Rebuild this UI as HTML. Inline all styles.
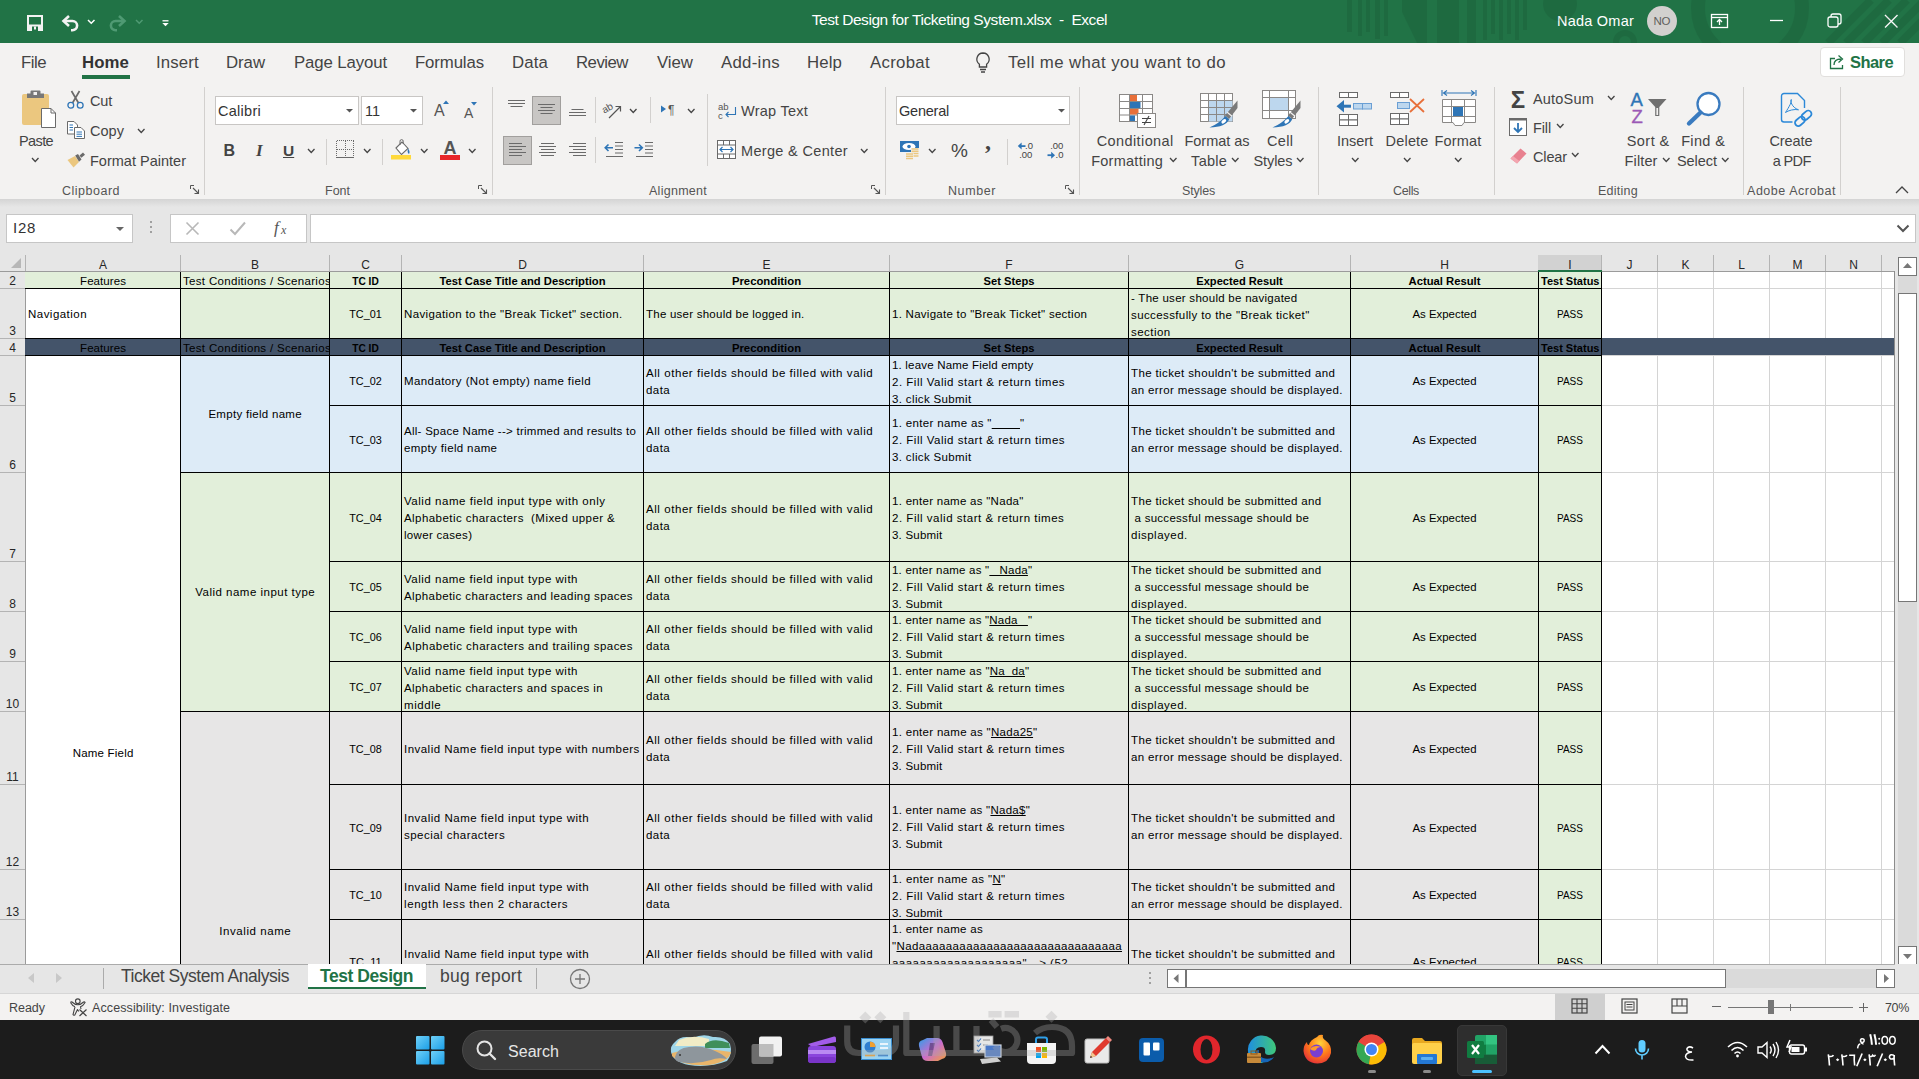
<!DOCTYPE html>
<html><head><meta charset="utf-8"><title>Excel</title><style>
html,body{margin:0;padding:0;}
body{width:1919px;height:1079px;overflow:hidden;position:relative;background:#e6e6e6;font-family:"Liberation Sans",sans-serif;}
.a{position:absolute;box-sizing:border-box;}
.t{white-space:nowrap;}
.c{position:absolute;white-space:nowrap;font-size:11.5px;line-height:17px;color:#000;}

svg{position:absolute;overflow:visible;}
u{text-decoration-thickness:1px;text-underline-offset:1px;}
</style></head><body>
<div class="a" style="left:0px;top:0px;width:1919px;height:43px;background:#217346;"></div>
<div class="a t" style="top:11px;font-size:15.5px;line-height:17px;color:#fff;letter-spacing:-0.44px;left:559.38px;width:800px;text-align:center;white-space:pre;">Test Design for Ticketing System.xlsx  -  Excel</div>
<div class="a t" style="top:13px;font-size:14.5px;line-height:16px;color:#fff;letter-spacing:0.23px;left:1557px;">Nada Omar</div>
<div class="a" style="left:1647px;top:6px;width:30px;height:30px;border-radius:15px;background:#d2d0ce;"></div>
<div class="a t" style="top:15px;font-size:11.5px;line-height:12px;color:#605e5c;letter-spacing:-0.12px;left:1261.94px;width:800px;text-align:center;">NO</div>
<div class="a" style="left:0px;top:43px;width:1919px;height:156px;background:#f3f2f1;"></div>
<div class="a t" style="top:53px;font-size:16.8px;line-height:19px;color:#444;letter-spacing:-0.52px;left:21px;">File</div>
<div class="a t" style="top:53px;font-size:16.8px;line-height:19px;color:#333;font-weight:700;letter-spacing:0.08px;left:82px;">Home</div>
<div class="a t" style="top:53px;font-size:16.8px;line-height:19px;color:#444;letter-spacing:0.16px;left:156px;">Insert</div>
<div class="a t" style="top:53px;font-size:16.8px;line-height:19px;color:#444;letter-spacing:-0.05px;left:226px;">Draw</div>
<div class="a t" style="top:53px;font-size:16.8px;line-height:19px;color:#444;letter-spacing:-0.12px;left:294px;">Page Layout</div>
<div class="a t" style="top:53px;font-size:16.8px;line-height:19px;color:#444;letter-spacing:-0.13px;left:415px;">Formulas</div>
<div class="a t" style="top:53px;font-size:16.8px;line-height:19px;color:#444;letter-spacing:0.13px;left:512px;">Data</div>
<div class="a t" style="top:53px;font-size:16.8px;line-height:19px;color:#444;letter-spacing:-0.51px;left:576px;">Review</div>
<div class="a t" style="top:53px;font-size:16.8px;line-height:19px;color:#444;letter-spacing:-0.03px;left:657px;">View</div>
<div class="a t" style="top:53px;font-size:16.8px;line-height:19px;color:#444;letter-spacing:0.29px;left:721px;">Add-ins</div>
<div class="a t" style="top:53px;font-size:16.8px;line-height:19px;color:#444;letter-spacing:0.11px;left:807px;">Help</div>
<div class="a t" style="top:53px;font-size:16.8px;line-height:19px;color:#444;letter-spacing:0.30px;left:870px;">Acrobat</div>
<div class="a" style="left:82px;top:75px;width:48px;height:4px;background:#217346;"></div>
<div class="a t" style="top:53px;font-size:16.8px;line-height:19px;color:#444;letter-spacing:0.40px;left:1008px;">Tell me what you want to do</div>
<div class="a" style="left:1820px;top:47px;width:85px;height:30px;background:#fff;border:1px solid #e1dfdd;border-radius:4px;"></div>
<div class="a t" style="top:53px;font-size:16.5px;line-height:18px;color:#217346;font-weight:700;letter-spacing:-0.57px;left:1850px;">Share</div>
<div class="a" style="left:204px;top:87px;width:1px;height:108px;background:#d2d0ce;"></div>
<div class="a" style="left:492px;top:87px;width:1px;height:108px;background:#d2d0ce;"></div>
<div class="a" style="left:885px;top:87px;width:1px;height:108px;background:#d2d0ce;"></div>
<div class="a" style="left:1079px;top:87px;width:1px;height:108px;background:#d2d0ce;"></div>
<div class="a" style="left:1318px;top:87px;width:1px;height:108px;background:#d2d0ce;"></div>
<div class="a" style="left:1494px;top:87px;width:1px;height:108px;background:#d2d0ce;"></div>
<div class="a" style="left:1743px;top:87px;width:1px;height:108px;background:#d2d0ce;"></div>
<div class="a" style="left:1840px;top:87px;width:1px;height:108px;background:#d2d0ce;"></div>
<div class="a t" style="top:133px;font-size:14.5px;line-height:16px;color:#444;letter-spacing:-0.62px;left:19px;">Paste</div>
<div class="a t" style="top:93px;font-size:14.5px;line-height:16px;color:#444;letter-spacing:-0.19px;left:90px;">Cut</div>
<div class="a t" style="top:123px;font-size:14.5px;line-height:16px;color:#444;letter-spacing:0.04px;left:90px;">Copy</div>
<div class="a t" style="top:153px;font-size:14.5px;line-height:16px;color:#444;letter-spacing:0.01px;left:90px;">Format Painter</div>
<div class="a t" style="top:184px;font-size:12.5px;line-height:14px;color:#555;letter-spacing:0.50px;left:62px;">Clipboard</div>
<div class="a t" style="top:184px;font-size:12.5px;line-height:14px;color:#555;letter-spacing:-0.00px;left:325px;">Font</div>
<div class="a t" style="top:184px;font-size:12.5px;line-height:14px;color:#555;letter-spacing:0.27px;left:649px;">Alignment</div>
<div class="a t" style="top:184px;font-size:12.5px;line-height:14px;color:#555;letter-spacing:0.59px;left:948px;">Number</div>
<div class="a t" style="top:184px;font-size:12.5px;line-height:14px;color:#555;letter-spacing:-0.17px;left:1182px;">Styles</div>
<div class="a t" style="top:184px;font-size:12.5px;line-height:14px;color:#555;letter-spacing:-0.36px;left:1393px;">Cells</div>
<div class="a t" style="top:184px;font-size:12.5px;line-height:14px;color:#555;letter-spacing:0.25px;left:1598px;">Editing</div>
<div class="a t" style="top:184px;font-size:12.5px;line-height:14px;color:#555;letter-spacing:0.54px;left:1747px;">Adobe Acrobat</div>
<div class="a" style="left:215px;top:96px;width:144px;height:29px;background:#fff;border:1px solid #c8c6c4;"></div>
<div class="a" style="left:361px;top:96px;width:62px;height:29px;background:#fff;border:1px solid #c8c6c4;"></div>
<div class="a t" style="top:103px;font-size:14.5px;line-height:16px;color:#333;letter-spacing:0.27px;left:218px;">Calibri</div>
<div class="a t" style="top:103px;font-size:14.5px;line-height:16px;color:#333;letter-spacing:-0.03px;left:365px;">11</div>
<div class="a t" style="top:142px;font-size:16px;line-height:17px;color:#444;font-weight:700;letter-spacing:-1.55px;left:223.5px;">B</div>
<div class="a t" style="top:142px;font-size:16px;line-height:17px;color:#444;left:256px;font-family:'Liberation Serif',serif;font-weight:700;font-size:17px;"><i>I</i></div>
<div class="a t" style="top:142px;font-size:15.5px;line-height:17px;color:#444;font-weight:700;left:283px;"><u>U</u></div>
<div class="a t" style="top:103px;font-size:14.5px;line-height:16px;color:#444;letter-spacing:0.25px;left:741px;">Wrap Text</div>
<div class="a t" style="top:143px;font-size:14.5px;line-height:16px;color:#444;letter-spacing:0.33px;left:741px;">Merge &amp; Center</div>
<div class="a" style="left:896px;top:96px;width:174px;height:29px;background:#fff;border:1px solid #c8c6c4;"></div>
<div class="a t" style="top:103px;font-size:14.5px;line-height:16px;color:#333;letter-spacing:-0.23px;left:899px;">General</div>
<div class="a t" style="top:140px;font-size:19px;line-height:21px;color:#444;letter-spacing:-1.40px;left:951px;">%</div>
<div class="a t" style="top:128px;font-size:24px;line-height:27px;color:#444;font-weight:700;left:985px;font-family:'Liberation Serif',serif;">,</div>
<div class="a t" style="top:133px;font-size:14.5px;line-height:16px;color:#444;letter-spacing:0.40px;left:735.20px;width:800px;text-align:center;">Conditional</div>
<div class="a t" style="top:153px;font-size:14.5px;line-height:16px;color:#444;letter-spacing:0.27px;left:727.14px;width:800px;text-align:center;">Formatting</div>
<div class="a t" style="top:133px;font-size:14.5px;line-height:16px;color:#444;letter-spacing:-0.03px;left:816.99px;width:800px;text-align:center;">Format as</div>
<div class="a t" style="top:153px;font-size:14.5px;line-height:16px;color:#444;letter-spacing:0.27px;left:809.13px;width:800px;text-align:center;">Table</div>
<div class="a t" style="top:133px;font-size:14.5px;line-height:16px;color:#444;letter-spacing:0.26px;left:880.13px;width:800px;text-align:center;">Cell</div>
<div class="a t" style="top:153px;font-size:14.5px;line-height:16px;color:#444;letter-spacing:-0.08px;left:872.96px;width:800px;text-align:center;">Styles</div>
<div class="a t" style="top:133px;font-size:14.5px;line-height:16px;color:#444;letter-spacing:-0.04px;left:954.98px;width:800px;text-align:center;">Insert</div>
<div class="a t" style="top:133px;font-size:14.5px;line-height:16px;color:#444;letter-spacing:0.18px;left:1007.09px;width:800px;text-align:center;">Delete</div>
<div class="a t" style="top:133px;font-size:14.5px;line-height:16px;color:#444;letter-spacing:0.18px;left:1058.09px;width:800px;text-align:center;">Format</div>
<div class="a t" style="top:91px;font-size:14.5px;line-height:16px;color:#444;letter-spacing:0.19px;left:1533px;">AutoSum</div>
<div class="a t" style="top:120px;font-size:14.5px;line-height:16px;color:#444;letter-spacing:-0.13px;left:1533px;">Fill</div>
<div class="a t" style="top:149px;font-size:14.5px;line-height:16px;color:#444;letter-spacing:-0.13px;left:1533px;">Clear</div>
<div class="a t" style="top:133px;font-size:14.5px;line-height:16px;color:#444;letter-spacing:0.45px;left:1248.23px;width:800px;text-align:center;">Sort &amp;</div>
<div class="a t" style="top:153px;font-size:14.5px;line-height:16px;color:#444;letter-spacing:0.13px;left:1241.07px;width:800px;text-align:center;">Filter</div>
<div class="a t" style="top:133px;font-size:14.5px;line-height:16px;color:#444;letter-spacing:0.35px;left:1303.17px;width:800px;text-align:center;">Find &amp;</div>
<div class="a t" style="top:153px;font-size:14.5px;line-height:16px;color:#444;letter-spacing:-0.05px;left:1296.98px;width:800px;text-align:center;">Select</div>
<div class="a t" style="top:133px;font-size:14.5px;line-height:16px;color:#444;letter-spacing:-0.09px;left:1390.96px;width:800px;text-align:center;">Create</div>
<div class="a t" style="top:153px;font-size:14.5px;line-height:16px;color:#444;letter-spacing:-0.62px;left:1391.69px;width:800px;text-align:center;">a PDF</div>
<div class="a" style="left:0;top:199px;width:1919px;height:8px;background:linear-gradient(#d4d4d4,#e6e6e6);"></div>
<div class="a" style="left:6px;top:213.5px;width:127px;height:29px;background:#fff;border:1px solid #c6c6c6;"></div>
<div class="a t" style="top:219px;font-size:15px;line-height:17px;color:#333;letter-spacing:0.72px;left:13px;">I28</div>
<div class="a" style="left:170px;top:213.5px;width:137px;height:29px;background:#fff;border:1px solid #c6c6c6;"></div>
<div class="a" style="left:310px;top:213.5px;width:1606px;height:29px;background:#fff;border:1px solid #c6c6c6;"></div>
<svg class="a" style="left:26px;top:14px;" width="18" height="18" viewBox="0 0 18 18"><rect x="2" y="2" width="14" height="14" fill="none" stroke="#f3f3f3" stroke-width="2"/><rect x="2" y="10.5" width="14" height="6" fill="#f3f3f3"/><rect x="6" y="12.5" width="6" height="4.5" fill="#217346"/><rect x="8" y="12.5" width="2" height="3" fill="#f3f3f3"/></svg>
<svg class="a" style="left:60px;top:13px;" width="22" height="19" viewBox="0 0 22 19"><path d="M9 3 L3.5 8 L9 13" fill="none" stroke="#f3f3f3" stroke-width="2.6"/><path d="M4 8 H12.5 a4.6 4.6 0 0 1 0 9.2 H11" fill="none" stroke="#f3f3f3" stroke-width="2.6"/></svg>
<svg class="a" style="left:87.25px;top:18.9px;" width="8.5" height="5.2" viewBox="0 0 8.5 5.2"><path d="M1 1 L4.25 4.2 L7.5 1" fill="none" stroke="#fff" stroke-width="1.5"/></svg>
<svg class="a" style="left:106px;top:13px;" width="22" height="19" viewBox="0 0 22 19"><path d="M13 3 L18.5 8 L13 13" fill="none" stroke="#4f9a73" stroke-width="2.6"/><path d="M18 8 H9.5 a4.6 4.6 0 0 0 0 9.2 H11" fill="none" stroke="#4f9a73" stroke-width="2.6"/></svg>
<svg class="a" style="left:135.25px;top:18.9px;" width="8.5" height="5.2" viewBox="0 0 8.5 5.2"><path d="M1 1 L4.25 4.2 L7.5 1" fill="none" stroke="#4f9a73" stroke-width="1.5"/></svg>
<svg class="a" style="left:160px;top:18px;" width="10" height="10" viewBox="0 0 10 10"><path d="M2.5 2.8 H8.5" stroke="#fff" stroke-width="1.3"/><path d="M2.3 5 H8.7 L5.5 8.3 Z" fill="#fff"/></svg>
<svg class="a" style="left:1710px;top:12px;" width="20" height="18" viewBox="0 0 20 18"><rect x="1.5" y="2.5" width="16" height="13" fill="none" stroke="#fff" stroke-width="1.3"/><path d="M1.5 5.5 H17.5" stroke="#fff" stroke-width="1.3"/><path d="M9.5 13 V8 M7 10 L9.5 7.5 L12 10" fill="none" stroke="#fff" stroke-width="1.3"/></svg>
<svg class="a" style="left:1770px;top:19px;" width="14" height="3" viewBox="0 0 14 3"><path d="M0 1.5 H13" stroke="#fff" stroke-width="1.3"/></svg>
<svg class="a" style="left:1827px;top:13px;" width="16" height="16" viewBox="0 0 16 16"><rect x="1" y="4" width="10" height="10" rx="2" fill="none" stroke="#fff" stroke-width="1.3"/><path d="M4 4 V3 a2 2 0 0 1 2 -2 H12 a2 2 0 0 1 2 2 V9 a2 2 0 0 1 -2 2 H11" fill="none" stroke="#fff" stroke-width="1.3"/></svg>
<svg class="a" style="left:1884px;top:14px;" width="15" height="15" viewBox="0 0 15 15"><path d="M1 1 L13.5 13.5 M13.5 1 L1 13.5" stroke="#fff" stroke-width="1.4"/></svg>
<svg class="a" style="left:974px;top:51px;" width="18" height="24" viewBox="0 0 18 24"><path d="M9 2 a6.2 6.2 0 0 0 -3.6 11.2 V16 H12.6 V13.2 A6.2 6.2 0 0 0 9 2 Z" fill="none" stroke="#444" stroke-width="1.3"/><path d="M6 18.5 H12 M7 21 H11" stroke="#444" stroke-width="1.3"/></svg>
<svg class="a" style="left:1829px;top:54px;" width="17" height="16" viewBox="0 0 17 16"><path d="M6 4.5 H1.5 V14.5 H13.5 V11" fill="none" stroke="#217346" stroke-width="1.3"/><path d="M5 11 C5 7 8 5 12 5 M9.5 1.5 L13.5 5 L9.5 8.5" fill="none" stroke="#217346" stroke-width="1.3"/></svg>
<svg class="a" style="left:116.0px;top:226.5px;" width="8" height="4" viewBox="0 0 8 4"><path d="M0 0 L8 0 L4.0 4 Z" fill="#666"/></svg>
<div class="a" style="left:150px;top:221px;width:2px;height:2px;background:#a0a0a0;"></div>
<div class="a" style="left:150px;top:226px;width:2px;height:2px;background:#a0a0a0;"></div>
<div class="a" style="left:150px;top:231px;width:2px;height:2px;background:#a0a0a0;"></div>
<svg class="a" style="left:185px;top:221px;" width="16" height="16" viewBox="0 0 16 16"><path d="M1.5 1.5 L13.5 13.5 M13.5 1.5 L1.5 13.5" stroke="#b8b8b8" stroke-width="1.6"/></svg>
<svg class="a" style="left:229px;top:221px;" width="18" height="16" viewBox="0 0 18 16"><path d="M1.5 8.5 L6 13 L16 1.5" fill="none" stroke="#b8b8b8" stroke-width="2"/></svg>
<div class="a t" style="top:218px;font-size:17px;line-height:19px;color:#555;left:274px;font-family:'Liberation Serif',serif;"><i>f</i></div>
<div class="a t" style="top:223px;font-size:12px;line-height:14px;color:#555;left:281px;font-family:'Liberation Serif',serif;"><i>x</i></div>
<svg class="a" style="left:1896px;top:224px;" width="14" height="9" viewBox="0 0 14 9"><path d="M1.5 1.5 L7 7 L12.5 1.5" fill="none" stroke="#555" stroke-width="2"/></svg>
<svg class="a" style="left:1280px;top:0px;overflow:hidden;" width="639" height="43" viewBox="0 0 639 43"><g fill="#000" opacity="0.07"><rect x="67" y="0" width="5" height="32"/><rect x="78" y="0" width="4" height="36"/><rect x="86" y="0" width="4" height="32"/><rect x="95" y="0" width="5" height="39"/><rect x="104" y="0" width="4" height="36"/><path d="M122 0 H147 V43 H137 L122 12 Z"/><rect x="157" y="0" width="22" height="43"/><rect x="187" y="0" width="9" height="43"/><rect x="203" y="0" width="4" height="40"/><rect x="211" y="0" width="4" height="34"/><rect x="219" y="0" width="4" height="40"/><rect x="227" y="0" width="4" height="34"/><rect x="235" y="0" width="4" height="40"/><rect x="243" y="0" width="4" height="30"/><circle cx="280" cy="4" r="17"/></g><g fill="none" stroke="#000" opacity="0.07"><circle cx="345" cy="42" r="9" stroke-width="6"/><circle cx="470" cy="8" r="52" stroke-width="14"/><path d="M548 43 L591 0 M566 43 L609 0 M584 43 L627 0 M602 43 L645 0 M620 43 L663 0" stroke-width="8"/></g></svg>
<svg class="a" style="left:19px;top:89px;" width="40" height="42" viewBox="0 0 40 42"><rect x="3" y="5" width="27" height="31" rx="2" fill="#ebc77f"/><path d="M8 9 V4.5 H11.5 V2.5 a1 1 0 0 1 1 -1 H20.5 a1 1 0 0 1 1 1 V4.5 H25 V9 Z" fill="#787878"/><rect x="14.5" y="3" width="3.5" height="3" fill="#f3f2f1"/><path d="M22.5 19.5 H32 L36.5 24 V38.5 H22.5 Z" fill="#fff" stroke="#6a6a6a" stroke-width="1"/><path d="M32 19.5 V24 H36.5" fill="none" stroke="#6a6a6a" stroke-width="1"/></svg>
<svg class="a" style="left:31.15px;top:156.75px;" width="8.5" height="5.5" viewBox="0 0 8.5 5.5"><path d="M1 1 L4.25 4.5 L7.5 1" fill="none" stroke="#444" stroke-width="1.3"/></svg>
<svg class="a" style="left:66px;top:90px;" width="19" height="20" viewBox="0 0 19 20"><path d="M5.5 1 L12.5 13 M13.5 1 L6.5 13" stroke="#6a6a6a" stroke-width="1.7" fill="none"/><circle cx="4.8" cy="15.2" r="2.9" fill="none" stroke="#2e75b6" stroke-width="1.3"/><circle cx="14.2" cy="15.2" r="2.9" fill="none" stroke="#2e75b6" stroke-width="1.3"/></svg>
<svg class="a" style="left:66px;top:120px;" width="20" height="20" viewBox="0 0 20 20"><path d="M1.5 1.5 H8 L11.5 5 V14 H1.5 Z" fill="#fff" stroke="#6a6a6a" stroke-width="1"/><path d="M3.5 5 H7 M3.5 7.5 H7 M3.5 10 H7" stroke="#2e75b6" stroke-width="1"/><path d="M8.5 7.5 H15 L18.5 11 V18.5 H8.5 Z" fill="#fff" stroke="#6a6a6a" stroke-width="1"/><path d="M10.5 12 H16 M10.5 14.2 H16 M10.5 16.4 H16" stroke="#2e75b6" stroke-width="1"/></svg>
<svg class="a" style="left:137.25px;top:128.05px;" width="8.5" height="5.5" viewBox="0 0 8.5 5.5"><path d="M1 1 L4.25 4.5 L7.5 1" fill="none" stroke="#444" stroke-width="1.3"/></svg>
<svg class="a" style="left:66px;top:151px;" width="20" height="18" viewBox="0 0 20 18"><path d="M1.5 9 L9 5 L13 11 L7.5 16.5 Z" fill="#ebc77f"/><path d="M9.2 4.6 L12 3 L15.5 8.5 L13 10.8 Z" fill="#6a6a6a"/><path d="M13.5 4.5 L17 1.5 L19 3.8 L15.3 6.8 Z" fill="#6a6a6a"/></svg>
<svg class="a" style="left:190px;top:185px;" width="10" height="10" viewBox="0 0 10 10"><path d="M0.5 4 V0.5 H4" fill="none" stroke="#555" stroke-width="1"/><path d="M3 3 L8.5 8.5 M8.5 4.5 V8.5 H4.5" fill="none" stroke="#555" stroke-width="1.1"/></svg>
<svg class="a" style="left:345.5px;top:108.75px;" width="7" height="3.5" viewBox="0 0 7 3.5"><path d="M0 0 L7 0 L3.5 3.5 Z" fill="#555"/></svg>
<svg class="a" style="left:409.5px;top:108.75px;" width="7" height="3.5" viewBox="0 0 7 3.5"><path d="M0 0 L7 0 L3.5 3.5 Z" fill="#555"/></svg>
<div class="a t" style="top:102px;font-size:16px;line-height:17px;color:#555;letter-spacing:-0.17px;left:434px;">A</div>
<svg class="a" style="left:443px;top:100px;" width="7" height="5" viewBox="0 0 7 5"><path d="M0 4 L3 0.5 L6 4 Z" fill="#2e75b6"/></svg>
<div class="a t" style="top:105px;font-size:14px;line-height:16px;color:#555;letter-spacing:0.66px;left:464px;">A</div>
<svg class="a" style="left:471px;top:101px;" width="7" height="5" viewBox="0 0 7 5"><path d="M0 1 L3 4.5 L6 1 Z" fill="#2e75b6"/></svg>
<svg class="a" style="left:306.75px;top:148.25px;" width="8.5" height="5.5" viewBox="0 0 8.5 5.5"><path d="M1 1 L4.25 4.5 L7.5 1" fill="none" stroke="#444" stroke-width="1.3"/></svg>
<div class="a" style="left:326px;top:139px;width:1px;height:26px;background:#d2d0ce;"></div>
<svg class="a" style="left:336px;top:140px;" width="18" height="19" viewBox="0 0 18 19"><g shape-rendering="crispEdges" fill="none" stroke="#6a6a6a" stroke-width="1"><path d="M0.5 0.5 H17.5 M0.5 0.5 V17 M17.5 0.5 V17 M9.5 0.5 V17 M0.5 9.5 H17.5" stroke-dasharray="1 1"/><path d="M0 17.5 H18"/></g></svg>
<svg class="a" style="left:362.75px;top:148.25px;" width="8.5" height="5.5" viewBox="0 0 8.5 5.5"><path d="M1 1 L4.25 4.5 L7.5 1" fill="none" stroke="#444" stroke-width="1.3"/></svg>
<div class="a" style="left:382px;top:139px;width:1px;height:26px;background:#d2d0ce;"></div>
<svg class="a" style="left:391px;top:139px;" width="20" height="24" viewBox="0 0 20 24"><path d="M5 9 L11 3 L17 9.5 L10.5 15.5 Z" fill="#fff" stroke="#6a6a6a" stroke-width="1.1"/><path d="M9 6 V2.2 a1.6 1.6 0 0 1 3.2 0 V5" fill="none" stroke="#6a6a6a" stroke-width="1"/><path d="M17 9.5 q2.5 3 1 5.5 q-2 -1 -1 -5.5" fill="#2e75b6"/><rect x="0" y="16" width="20" height="4.5" fill="#ffd93b"/></svg>
<svg class="a" style="left:419.75px;top:148.25px;" width="8.5" height="5.5" viewBox="0 0 8.5 5.5"><path d="M1 1 L4.25 4.5 L7.5 1" fill="none" stroke="#444" stroke-width="1.3"/></svg>
<div class="a t" style="top:138px;font-size:18px;line-height:20px;color:#555;font-weight:700;letter-spacing:0.00px;left:50.00px;width:800px;text-align:center;">A</div>
<div class="a" style="left:440px;top:155px;width:20px;height:4.5px;background:#e8262a;"></div>
<svg class="a" style="left:467.75px;top:148.25px;" width="8.5" height="5.5" viewBox="0 0 8.5 5.5"><path d="M1 1 L4.25 4.5 L7.5 1" fill="none" stroke="#444" stroke-width="1.3"/></svg>
<svg class="a" style="left:478px;top:185px;" width="10" height="10" viewBox="0 0 10 10"><path d="M0.5 4 V0.5 H4" fill="none" stroke="#555" stroke-width="1"/><path d="M3 3 L8.5 8.5 M8.5 4.5 V8.5 H4.5" fill="none" stroke="#555" stroke-width="1.1"/></svg>
<div class="a" style="left:532px;top:96px;width:29px;height:29px;background:#c8c6c4;border:1px solid #a19f9d;"></div>
<div class="a" style="left:503px;top:136px;width:29px;height:29px;background:#c8c6c4;border:1px solid #a19f9d;"></div>
<svg class="a" style="left:508px;top:100px;" width="17" height="10" viewBox="0 0 17 10"><path d="M0.0 0.5 H17.0" stroke="#6a6a6a" stroke-width="1"/><path d="M0.0 3.5 H17.0" stroke="#6a6a6a" stroke-width="1"/><path d="M2.5 6.5 H14.5" stroke="#6a6a6a" stroke-width="1"/></svg>
<svg class="a" style="left:538px;top:104px;" width="17" height="13" viewBox="0 0 17 13"><path d="M0.0 0.5 H17.0" stroke="#6a6a6a" stroke-width="1"/><path d="M2.5 3.5 H14.5" stroke="#6a6a6a" stroke-width="1"/><path d="M0.0 6.5 H17.0" stroke="#6a6a6a" stroke-width="1"/><path d="M2.5 9.5 H14.5" stroke="#6a6a6a" stroke-width="1"/></svg>
<svg class="a" style="left:569px;top:109px;" width="17" height="10" viewBox="0 0 17 10"><path d="M2.5 0.5 H14.5" stroke="#6a6a6a" stroke-width="1"/><path d="M0.0 3.5 H17.0" stroke="#6a6a6a" stroke-width="1"/><path d="M0.0 6.5 H17.0" stroke="#6a6a6a" stroke-width="1"/></svg>
<div class="a" style="left:595px;top:97px;width:1px;height:26px;background:#d2d0ce;"></div>
<svg class="a" style="left:603px;top:100px;" width="20" height="20" viewBox="0 0 20 20"><text x="0" y="11" font-size="10" font-family="Liberation Sans" fill="#555" transform="rotate(-30 6 10)">ab</text><path d="M6 18 L17 7 M12.5 6.5 H17.5 V11.5" fill="none" stroke="#555" stroke-width="1.2"/></svg>
<svg class="a" style="left:628.75px;top:108.25px;" width="8.5" height="5.5" viewBox="0 0 8.5 5.5"><path d="M1 1 L4.25 4.5 L7.5 1" fill="none" stroke="#444" stroke-width="1.3"/></svg>
<div class="a" style="left:650px;top:97px;width:1px;height:26px;background:#d2d0ce;"></div>
<svg class="a" style="left:660px;top:103px;" width="20" height="14" viewBox="0 0 20 14"><path d="M1 2.5 L6 6 L1 9.5 Z" fill="#2e75b6"/><text x="8" y="11" font-size="12" font-family="Liberation Sans" fill="#555">¶</text></svg>
<svg class="a" style="left:686.75px;top:108.25px;" width="8.5" height="5.5" viewBox="0 0 8.5 5.5"><path d="M1 1 L4.25 4.5 L7.5 1" fill="none" stroke="#444" stroke-width="1.3"/></svg>
<svg class="a" style="left:509px;top:143px;" width="17" height="16" viewBox="0 0 17 16"><path d="M0 0.5 H13" stroke="#6a6a6a" stroke-width="1"/><path d="M0 3.5 H17" stroke="#6a6a6a" stroke-width="1"/><path d="M0 6.5 H13" stroke="#6a6a6a" stroke-width="1"/><path d="M0 9.5 H17" stroke="#6a6a6a" stroke-width="1"/><path d="M0 12.5 H13" stroke="#6a6a6a" stroke-width="1"/></svg>
<svg class="a" style="left:539px;top:143px;" width="17" height="16" viewBox="0 0 17 16"><path d="M2.0 0.5 H15.0" stroke="#6a6a6a" stroke-width="1"/><path d="M0.0 3.5 H17.0" stroke="#6a6a6a" stroke-width="1"/><path d="M2.0 6.5 H15.0" stroke="#6a6a6a" stroke-width="1"/><path d="M0.0 9.5 H17.0" stroke="#6a6a6a" stroke-width="1"/><path d="M2.0 12.5 H15.0" stroke="#6a6a6a" stroke-width="1"/></svg>
<svg class="a" style="left:569px;top:143px;" width="17" height="16" viewBox="0 0 17 16"><path d="M4 0.5 H17" stroke="#6a6a6a" stroke-width="1"/><path d="M0 3.5 H17" stroke="#6a6a6a" stroke-width="1"/><path d="M4 6.5 H17" stroke="#6a6a6a" stroke-width="1"/><path d="M0 9.5 H17" stroke="#6a6a6a" stroke-width="1"/><path d="M4 12.5 H17" stroke="#6a6a6a" stroke-width="1"/></svg>
<div class="a" style="left:595px;top:137px;width:1px;height:26px;background:#d2d0ce;"></div>
<svg class="a" style="left:604px;top:142px;" width="20" height="16" viewBox="0 0 20 16"><path d="M11 0.5 H19 M11 4 H19 M11 7.5 H19 M11 11 H19 M2 14.5 H19" stroke="#6a6a6a" stroke-width="1"/><path d="M9 5.8 H1.5 M4.5 2.5 L1.2 5.8 L4.5 9" fill="none" stroke="#2e75b6" stroke-width="1.6"/></svg>
<svg class="a" style="left:634px;top:142px;" width="20" height="16" viewBox="0 0 20 16"><path d="M11 0.5 H19 M11 4 H19 M11 7.5 H19 M11 11 H19 M2 14.5 H19" stroke="#6a6a6a" stroke-width="1"/><path d="M0.5 5.8 H8 M5 2.5 L8.3 5.8 L5 9" fill="none" stroke="#2e75b6" stroke-width="1.6"/></svg>
<div class="a" style="left:707px;top:94px;width:1px;height:72px;background:#d2d0ce;"></div>
<svg class="a" style="left:718px;top:102px;" width="20" height="18" viewBox="0 0 20 18"><text x="0" y="8" font-size="9.5" font-family="Liberation Sans" fill="#555">ab</text><text x="0" y="16.5" font-size="9.5" font-family="Liberation Sans" fill="#555">c</text><path d="M17.5 5 V12.5 H8 M10.5 10 L8 12.5 L10.5 15" fill="none" stroke="#2e75b6" stroke-width="1.1"/></svg>
<svg class="a" style="left:717px;top:140px;" width="20" height="20" viewBox="0 0 20 20"><rect x="0.5" y="0.5" width="18" height="18" fill="#fff" stroke="#6a6a6a" stroke-width="1"/><path d="M0.5 5 H18.5 M0.5 14 H18.5 M6.5 0.5 V5 M12.5 0.5 V5 M6.5 14 V18.5 M12.5 14 V18.5" stroke="#6a6a6a" stroke-width="1"/><path d="M3 9.5 H16 M5.5 7 L3 9.5 L5.5 12 M13.5 7 L16 9.5 L13.5 12" fill="none" stroke="#2e75b6" stroke-width="1.2"/></svg>
<svg class="a" style="left:859.75px;top:148.25px;" width="8.5" height="5.5" viewBox="0 0 8.5 5.5"><path d="M1 1 L4.25 4.5 L7.5 1" fill="none" stroke="#444" stroke-width="1.3"/></svg>
<svg class="a" style="left:871px;top:185px;" width="10" height="10" viewBox="0 0 10 10"><path d="M0.5 4 V0.5 H4" fill="none" stroke="#555" stroke-width="1"/><path d="M3 3 L8.5 8.5 M8.5 4.5 V8.5 H4.5" fill="none" stroke="#555" stroke-width="1.1"/></svg>
<svg class="a" style="left:1057.5px;top:108.75px;" width="7" height="3.5" viewBox="0 0 7 3.5"><path d="M0 0 L7 0 L3.5 3.5 Z" fill="#555"/></svg>
<svg class="a" style="left:899px;top:140px;" width="22" height="22" viewBox="0 0 22 22"><rect x="1" y="1" width="19" height="11" fill="#2e75b6"/><ellipse cx="10" cy="6.5" rx="6.5" ry="3.6" fill="#fff"/><circle cx="10" cy="6.5" r="1.8" fill="#2e75b6"/><rect x="12" y="8" width="8" height="9.5" fill="#f3f2f1"/><path d="M12.5 9 H19.5 M12.5 11.3 H19.5 M12.5 13.6 H19.5 M12.5 15.9 H19.5" stroke="#ebc77f" stroke-width="1.5"/><rect x="6.5" y="13" width="8" height="7.5" fill="#f3f2f1"/><path d="M7 14 H14 M7 16.3 H14 M7 18.6 H14" stroke="#ebc77f" stroke-width="1.5"/></svg>
<svg class="a" style="left:927.75px;top:148.25px;" width="8.5" height="5.5" viewBox="0 0 8.5 5.5"><path d="M1 1 L4.25 4.5 L7.5 1" fill="none" stroke="#444" stroke-width="1.3"/></svg>
<div class="a" style="left:1007px;top:139px;width:1px;height:26px;background:#d2d0ce;"></div>
<svg class="a" style="left:1017px;top:140px;" width="20" height="20" viewBox="0 0 20 20"><path d="M8.5 6.1 H2.5" fill="none" stroke="#2e75b6" stroke-width="1.8"/><path d="M0.8 6.1 L4.6 2.6 V9.6 Z" fill="#2e75b6"/><text x="8" y="8.8" font-size="9.5" font-family="Liberation Sans" fill="#444">.0</text><text x="2.2" y="17.7" font-size="9.5" font-family="Liberation Sans" fill="#444">.00</text></svg>
<svg class="a" style="left:1047px;top:140px;" width="20" height="20" viewBox="0 0 20 20"><text x="3.2" y="8.8" font-size="9.5" font-family="Liberation Sans" fill="#444">.00</text><path d="M0.5 15.2 H6" fill="none" stroke="#2e75b6" stroke-width="1.8"/><path d="M8 15.2 L4.2 11.7 V18.7 Z" fill="#2e75b6"/><text x="8.5" y="17.7" font-size="9.5" font-family="Liberation Sans" fill="#444">.0</text></svg>
<svg class="a" style="left:1065px;top:185px;" width="10" height="10" viewBox="0 0 10 10"><path d="M0.5 4 V0.5 H4" fill="none" stroke="#555" stroke-width="1"/><path d="M3 3 L8.5 8.5 M8.5 4.5 V8.5 H4.5" fill="none" stroke="#555" stroke-width="1.1"/></svg>
<svg class="a" style="left:1168.75px;top:157.25px;" width="8.5" height="5.5" viewBox="0 0 8.5 5.5"><path d="M1 1 L4.25 4.5 L7.5 1" fill="none" stroke="#444" stroke-width="1.3"/></svg>
<svg class="a" style="left:1230.75px;top:157.25px;" width="8.5" height="5.5" viewBox="0 0 8.5 5.5"><path d="M1 1 L4.25 4.5 L7.5 1" fill="none" stroke="#444" stroke-width="1.3"/></svg>
<svg class="a" style="left:1295.75px;top:157.25px;" width="8.5" height="5.5" viewBox="0 0 8.5 5.5"><path d="M1 1 L4.25 4.5 L7.5 1" fill="none" stroke="#444" stroke-width="1.3"/></svg>
<svg class="a" style="left:1119px;top:94px;" width="38" height="36" viewBox="0 0 38 36"><rect x="0.5" y="0.5" width="33" height="27" fill="#fff" stroke="#8a8886" stroke-width="1"/><path d="M0.5 7.5 H33.5 M0.5 14.5 H33.5 M0.5 21 H33.5 M10.5 0.5 V27.5 M23.5 0.5 V27.5" stroke="#8a8886" stroke-width="1"/><rect x="11" y="1" width="7" height="6" fill="#e8703a"/><rect x="11" y="8" width="10.5" height="6" fill="#2e75b6"/><rect x="11" y="15" width="8.5" height="5.5" fill="#e8703a"/><rect x="11" y="21.5" width="5" height="5.5" fill="#2e75b6"/><rect x="18.5" y="19.5" width="18" height="14" fill="#fff" stroke="#8a8886" stroke-width="1"/><path d="M23 24.5 H32 M23 28.5 H32 M30 22 L25 31" stroke="#444" stroke-width="1.1"/></svg>
<svg class="a" style="left:1199px;top:93px;" width="42" height="38" viewBox="0 0 42 38"><rect x="1.5" y="0.5" width="32" height="28" fill="#fff" stroke="#8a8886" stroke-width="1"/><rect x="9.5" y="7.5" width="24" height="21" fill="#bdd7ee"/><path d="M1.5 7.5 H33.5 M1.5 14.5 H33.5 M1.5 21.5 H33.5 M9.5 0.5 V28.5 M17.5 0.5 V28.5 M25.5 0.5 V28.5" stroke="#8a8886" stroke-width="1"/><g transform="translate(0,0)"><path d="M38.5 7.5 V15 L30 26 L26 22.5 Z" fill="#7a7a7a"/><path d="M28.2 19.3 L33 23.2" stroke="#f3f2f1" stroke-width="1.2"/><path d="M26.5 23 L30.2 26.2 Q27 34 10.5 34.5 Q20 30.5 26.5 23 Z" fill="#2e75b6"/><ellipse cx="24.8" cy="28.3" rx="2.8" ry="1.7" fill="#fff" transform="rotate(-40 24.8 28.3)"/></g></svg>
<svg class="a" style="left:1261px;top:90px;" width="42" height="40" viewBox="0 0 42 40"><rect x="1.5" y="0.5" width="33" height="28" fill="#fff" stroke="#8a8886" stroke-width="1"/><path d="M1.5 7.5 H34.5 M1.5 20.5 H34.5 M8.5 0.5 V28.5 M27.5 0.5 V28.5" stroke="#8a8886" stroke-width="1"/><rect x="9" y="8" width="18" height="12" fill="#bdd7ee"/><g transform="translate(1,3)"><path d="M38.5 7.5 V15 L30 26 L26 22.5 Z" fill="#7a7a7a"/><path d="M28.2 19.3 L33 23.2" stroke="#f3f2f1" stroke-width="1.2"/><path d="M26.5 23 L30.2 26.2 Q27 34 10.5 34.5 Q20 30.5 26.5 23 Z" fill="#2e75b6"/><ellipse cx="24.8" cy="28.3" rx="2.8" ry="1.7" fill="#fff" transform="rotate(-40 24.8 28.3)"/></g></svg>
<svg class="a" style="left:1350.75px;top:157.25px;" width="8.5" height="5.5" viewBox="0 0 8.5 5.5"><path d="M1 1 L4.25 4.5 L7.5 1" fill="none" stroke="#444" stroke-width="1.3"/></svg>
<svg class="a" style="left:1402.75px;top:157.25px;" width="8.5" height="5.5" viewBox="0 0 8.5 5.5"><path d="M1 1 L4.25 4.5 L7.5 1" fill="none" stroke="#444" stroke-width="1.3"/></svg>
<svg class="a" style="left:1453.75px;top:157.25px;" width="8.5" height="5.5" viewBox="0 0 8.5 5.5"><path d="M1 1 L4.25 4.5 L7.5 1" fill="none" stroke="#444" stroke-width="1.3"/></svg>
<svg class="a" style="left:1336px;top:92px;" width="38" height="36" viewBox="0 0 38 36"><rect x="3.5" y="0.5" width="9" height="5" fill="#fff" stroke="#6a6a6a"/><rect x="12.5" y="0.5" width="9" height="5" fill="#fff" stroke="#6a6a6a"/><rect x="17.5" y="11.5" width="9" height="5.5" fill="#bdd7ee" stroke="#6a9fd4"/><rect x="26.5" y="11.5" width="9" height="5.5" fill="#bdd7ee" stroke="#6a9fd4"/><path d="M15 14.2 H5" fill="none" stroke="#2e75b6" stroke-width="3"/><path d="M0.5 14.2 L8 8 V20.5 Z" fill="#2e75b6"/><rect x="3.5" y="22.5" width="9" height="5.5" fill="#fff" stroke="#6a6a6a"/><rect x="12.5" y="22.5" width="9" height="5.5" fill="#fff" stroke="#6a6a6a"/><rect x="3.5" y="28" width="9" height="5.5" fill="#fff" stroke="#6a6a6a"/><rect x="12.5" y="28" width="9" height="5.5" fill="#fff" stroke="#6a6a6a"/></svg>
<svg class="a" style="left:1388px;top:92px;" width="40" height="36" viewBox="0 0 40 36"><rect x="2.5" y="0.5" width="9" height="5" fill="#fff" stroke="#6a6a6a"/><rect x="11.5" y="0.5" width="9" height="5" fill="#fff" stroke="#6a6a6a"/><rect x="9.5" y="10.5" width="12" height="6" fill="#bdd7ee" stroke="#6a9fd4"/><rect x="2.5" y="21.5" width="9" height="5.5" fill="#fff" stroke="#6a6a6a"/><rect x="11.5" y="21.5" width="9" height="5.5" fill="#fff" stroke="#6a6a6a"/><rect x="2.5" y="27" width="9" height="5.5" fill="#fff" stroke="#6a6a6a"/><rect x="11.5" y="27" width="9" height="5.5" fill="#fff" stroke="#6a6a6a"/><path d="M22 7 L36 20 M36 7 L22 20" stroke="#e8703a" stroke-width="1.8"/></svg>
<svg class="a" style="left:1440px;top:89px;" width="38" height="40" viewBox="0 0 38 40"><path d="M2 1 V7 M36 1 V7 M3 4 H35 M7 1.5 L3.5 4 L7 6.5 M31 1.5 L34.5 4 L31 6.5" fill="none" stroke="#2e75b6" stroke-width="1.1"/><path d="M2.5 10.5 H35.5 V33.5 H24 L22 36.5 H15 L13 33.5 H2.5 Z" fill="#fff" stroke="#8a8886"/><path d="M2.5 17.5 H35.5 M2.5 27.5 H35.5 M11.5 10.5 V33.5 M24.5 10.5 V33.5" stroke="#8a8886"/><rect x="13" y="18" width="10" height="9" fill="#2e75b6"/></svg>
<div class="a t" style="top:86px;font-size:24px;line-height:27px;color:#444;font-weight:700;left:1118.00px;width:800px;text-align:center;">Σ</div>
<svg class="a" style="left:1606.75px;top:95.25px;" width="8.5" height="5.5" viewBox="0 0 8.5 5.5"><path d="M1 1 L4.25 4.5 L7.5 1" fill="none" stroke="#444" stroke-width="1.3"/></svg>
<svg class="a" style="left:1509px;top:118px;" width="19" height="19" viewBox="0 0 19 19"><rect x="0.5" y="0.5" width="17" height="17" fill="#fff" stroke="#6a6a6a"/><rect x="0.5" y="0.5" width="17" height="2" fill="#6a6a6a"/><path d="M9 5 V13.5 M5 10 L9 14 L13 10" fill="none" stroke="#2e75b6" stroke-width="1.8"/></svg>
<svg class="a" style="left:1555.75px;top:123.25px;" width="8.5" height="5.5" viewBox="0 0 8.5 5.5"><path d="M1 1 L4.25 4.5 L7.5 1" fill="none" stroke="#444" stroke-width="1.3"/></svg>
<svg class="a" style="left:1509px;top:147px;" width="20" height="18" viewBox="0 0 20 18"><path d="M1.5 11.5 L11.5 1.5 L17.5 6.5 L8 16.5 Z" fill="#e8818f"/><path d="M1.5 11.5 L4 9 L10.3 14 L8 16.5 Z" fill="#f3a6b0"/></svg>
<svg class="a" style="left:1570.75px;top:152.25px;" width="8.5" height="5.5" viewBox="0 0 8.5 5.5"><path d="M1 1 L4.25 4.5 L7.5 1" fill="none" stroke="#444" stroke-width="1.3"/></svg>
<svg class="a" style="left:1629px;top:88px;" width="40" height="40" viewBox="0 0 40 40"><text x="1.5" y="17.5" font-size="18.5" font-family="Liberation Sans" fill="#2e75b6" stroke="#2e75b6" stroke-width="0.4">A</text><text x="2.5" y="35" font-size="18.5" font-family="Liberation Sans" fill="#9b59b6" stroke="#9b59b6" stroke-width="0.4">Z</text><path d="M19 11 H37.5 L30.3 19 V28 H26.2 V19 Z" fill="#6f6f6f"/><rect x="27.4" y="20" width="1.7" height="7" fill="#f3f2f1"/></svg>
<svg class="a" style="left:1661.75px;top:157.25px;" width="8.5" height="5.5" viewBox="0 0 8.5 5.5"><path d="M1 1 L4.25 4.5 L7.5 1" fill="none" stroke="#444" stroke-width="1.3"/></svg>
<svg class="a" style="left:1685px;top:89.5px;" width="40" height="40" viewBox="0 0 40 40"><circle cx="23.5" cy="14" r="11" fill="#fff" stroke="#3a7bbf" stroke-width="2.3"/><path d="M15.5 22.5 L4 33.5" stroke="#3a7bbf" stroke-width="4.4" stroke-linecap="round"/></svg>
<svg class="a" style="left:1720.75px;top:157.25px;" width="8.5" height="5.5" viewBox="0 0 8.5 5.5"><path d="M1 1 L4.25 4.5 L7.5 1" fill="none" stroke="#444" stroke-width="1.3"/></svg>
<svg class="a" style="left:1776px;top:93px;" width="42" height="40" viewBox="0 0 42 40"><path d="M5.5 3 a2.5 2.5 0 0 1 2.5 -2.5 H21.5 L28.5 7.5 V15 M5.5 3 V26.5 a2.5 2.5 0 0 0 2.5 2.5 H16.5" fill="none" stroke="#2b88d8" stroke-width="1.4"/><path d="M9.5 19.5 C13 14 16.2 8.5 15.3 6.5 C13.8 7 15.5 14.5 22.5 16.8 C18.5 15.8 12 17.5 9.5 19.5 Z" fill="none" stroke="#2b88d8" stroke-width="1"/><g fill="none" stroke="#2b88d8" stroke-width="1.8"><rect x="18.5" y="25" width="11" height="6.6" rx="3.3" transform="rotate(-40 24 28.3)"/><rect x="25" y="19" width="11" height="6.6" rx="3.3" transform="rotate(-40 30.5 22.3)"/></g></svg>
<svg class="a" style="left:1895px;top:186px;" width="14" height="8" viewBox="0 0 14 8"><path d="M1 7 L7 1 L13 7" fill="none" stroke="#444" stroke-width="1.3"/></svg>
<div class="a" style="left:0;top:255px;width:1894px;height:709px;overflow:hidden;background:#fff;">
<div class="a" style="left:1601px;top:16px;width:1px;height:693px;background:#d4d4d4;"></div>
<div class="a" style="left:1657px;top:16px;width:1px;height:693px;background:#d4d4d4;"></div>
<div class="a" style="left:1713px;top:16px;width:1px;height:693px;background:#d4d4d4;"></div>
<div class="a" style="left:1769px;top:16px;width:1px;height:693px;background:#d4d4d4;"></div>
<div class="a" style="left:1825px;top:16px;width:1px;height:693px;background:#d4d4d4;"></div>
<div class="a" style="left:1881px;top:16px;width:1px;height:693px;background:#d4d4d4;"></div>
<div class="a" style="left:1937px;top:16px;width:1px;height:693px;background:#d4d4d4;"></div>
<div class="a" style="left:1601px;top:33px;width:293px;height:1px;background:#d4d4d4;"></div>
<div class="a" style="left:1601px;top:83px;width:293px;height:1px;background:#d4d4d4;"></div>
<div class="a" style="left:1601px;top:100px;width:293px;height:1px;background:#d4d4d4;"></div>
<div class="a" style="left:1601px;top:150px;width:293px;height:1px;background:#d4d4d4;"></div>
<div class="a" style="left:1601px;top:217px;width:293px;height:1px;background:#d4d4d4;"></div>
<div class="a" style="left:1601px;top:306px;width:293px;height:1px;background:#d4d4d4;"></div>
<div class="a" style="left:1601px;top:356px;width:293px;height:1px;background:#d4d4d4;"></div>
<div class="a" style="left:1601px;top:406px;width:293px;height:1px;background:#d4d4d4;"></div>
<div class="a" style="left:1601px;top:456px;width:293px;height:1px;background:#d4d4d4;"></div>
<div class="a" style="left:1601px;top:529px;width:293px;height:1px;background:#d4d4d4;"></div>
<div class="a" style="left:1601px;top:614px;width:293px;height:1px;background:#d4d4d4;"></div>
<div class="a" style="left:1601px;top:664px;width:293px;height:1px;background:#d4d4d4;"></div>
<div class="a" style="left:1601px;top:755px;width:293px;height:1px;background:#d4d4d4;"></div>
<div class="a" style="left:0px;top:0px;width:1894px;height:17px;background:#e6e6e6;"></div>
<div class="a" style="left:0px;top:16px;width:1894px;height:1px;background:#9b9b9b;"></div>
<div class="a" style="left:180px;top:0px;width:1px;height:16px;background:#b4b4b4;"></div>
<div class="a" style="left:329px;top:0px;width:1px;height:16px;background:#b4b4b4;"></div>
<div class="a" style="left:401px;top:0px;width:1px;height:16px;background:#b4b4b4;"></div>
<div class="a" style="left:643px;top:0px;width:1px;height:16px;background:#b4b4b4;"></div>
<div class="a" style="left:889px;top:0px;width:1px;height:16px;background:#b4b4b4;"></div>
<div class="a" style="left:1128px;top:0px;width:1px;height:16px;background:#b4b4b4;"></div>
<div class="a" style="left:1350px;top:0px;width:1px;height:16px;background:#b4b4b4;"></div>
<div class="a" style="left:1538px;top:0px;width:1px;height:16px;background:#b4b4b4;"></div>
<div class="a" style="left:1538px;top:0px;width:63px;height:16px;background:#d2d2d2;"></div>
<div class="a" style="left:1601px;top:0px;width:1px;height:16px;background:#b4b4b4;"></div>
<div class="a" style="left:1657px;top:0px;width:1px;height:16px;background:#b4b4b4;"></div>
<div class="a" style="left:1713px;top:0px;width:1px;height:16px;background:#b4b4b4;"></div>
<div class="a" style="left:1769px;top:0px;width:1px;height:16px;background:#b4b4b4;"></div>
<div class="a" style="left:1825px;top:0px;width:1px;height:16px;background:#b4b4b4;"></div>
<div class="a" style="left:1881px;top:0px;width:1px;height:16px;background:#b4b4b4;"></div>
<div class="a" style="left:25px;top:0px;width:1px;height:16px;background:#b4b4b4;"></div>
<div class="a" style="left:0px;top:17px;width:25px;height:692px;background:#e6e6e6;"></div>
<div class="a" style="left:25px;top:17px;width:1px;height:692px;background:#9b9b9b;"></div>
<div class="a" style="left:25px;top:16px;width:1576px;height:17px;background:#e2efda;"></div>
<div class="a" style="left:180px;top:33px;width:1421px;height:50px;background:#e2efda;"></div>
<div class="a" style="left:25px;top:83px;width:1869px;height:17px;background:#44546a;"></div>
<div class="a" style="left:180px;top:100px;width:1358px;height:117px;background:#ddebf7;"></div>
<div class="a" style="left:180px;top:217px;width:1358px;height:239px;background:#e2efda;"></div>
<div class="a" style="left:180px;top:456px;width:1358px;height:299px;background:#e7e6e6;"></div>
<div class="a" style="left:1538px;top:100px;width:63px;height:655px;background:#e2efda;"></div>
<div class="a" style="left:25px;top:16px;width:1869px;height:1px;background:#9b9b9b;"></div>
<div class="a" style="left:1538px;top:15px;width:64px;height:2px;background:#217346;"></div>
<div class="a" style="left:25px;top:33px;width:1577px;height:1px;background:#000;"></div>
<div class="a" style="left:25px;top:83px;width:1577px;height:1px;background:#000;"></div>
<div class="a" style="left:25px;top:100px;width:1577px;height:1px;background:#000;"></div>
<div class="a" style="left:329px;top:150px;width:1272px;height:1px;background:#000;"></div>
<div class="a" style="left:180px;top:217px;width:1421px;height:1px;background:#000;"></div>
<div class="a" style="left:329px;top:306px;width:1272px;height:1px;background:#000;"></div>
<div class="a" style="left:329px;top:356px;width:1272px;height:1px;background:#000;"></div>
<div class="a" style="left:329px;top:406px;width:1272px;height:1px;background:#000;"></div>
<div class="a" style="left:180px;top:456px;width:1421px;height:1px;background:#000;"></div>
<div class="a" style="left:329px;top:529px;width:1272px;height:1px;background:#000;"></div>
<div class="a" style="left:329px;top:614px;width:1272px;height:1px;background:#000;"></div>
<div class="a" style="left:329px;top:664px;width:1272px;height:1px;background:#000;"></div>
<div class="a" style="left:180px;top:17px;width:1px;height:692px;background:#000;"></div>
<div class="a" style="left:329px;top:17px;width:1px;height:692px;background:#000;"></div>
<div class="a" style="left:401px;top:17px;width:1px;height:692px;background:#000;"></div>
<div class="a" style="left:643px;top:17px;width:1px;height:692px;background:#000;"></div>
<div class="a" style="left:889px;top:17px;width:1px;height:692px;background:#000;"></div>
<div class="a" style="left:1128px;top:17px;width:1px;height:692px;background:#000;"></div>
<div class="a" style="left:1350px;top:17px;width:1px;height:692px;background:#000;"></div>
<div class="a" style="left:1538px;top:17px;width:1px;height:692px;background:#000;"></div>
<div class="a" style="left:1601px;top:17px;width:1px;height:692px;background:#000;"></div>
</div>
<div class="a t" style="top:258px;font-size:12px;line-height:14px;color:#262626;left:-297.00px;width:800px;text-align:center;">A</div>
<div class="a t" style="top:258px;font-size:12px;line-height:14px;color:#262626;left:-145.00px;width:800px;text-align:center;">B</div>
<div class="a t" style="top:258px;font-size:12px;line-height:14px;color:#262626;left:-34.50px;width:800px;text-align:center;">C</div>
<div class="a t" style="top:258px;font-size:12px;line-height:14px;color:#262626;left:122.50px;width:800px;text-align:center;">D</div>
<div class="a t" style="top:258px;font-size:12px;line-height:14px;color:#262626;left:366.50px;width:800px;text-align:center;">E</div>
<div class="a t" style="top:258px;font-size:12px;line-height:14px;color:#262626;left:609.00px;width:800px;text-align:center;">F</div>
<div class="a t" style="top:258px;font-size:12px;line-height:14px;color:#262626;left:839.50px;width:800px;text-align:center;">G</div>
<div class="a t" style="top:258px;font-size:12px;line-height:14px;color:#262626;left:1044.50px;width:800px;text-align:center;">H</div>
<div class="a t" style="top:258px;font-size:12px;line-height:14px;color:#262626;left:1170.00px;width:800px;text-align:center;">I</div>
<div class="a t" style="top:258px;font-size:12px;line-height:14px;color:#262626;left:1229.50px;width:800px;text-align:center;">J</div>
<div class="a t" style="top:258px;font-size:12px;line-height:14px;color:#262626;left:1285.50px;width:800px;text-align:center;">K</div>
<div class="a t" style="top:258px;font-size:12px;line-height:14px;color:#262626;left:1341.50px;width:800px;text-align:center;">L</div>
<div class="a t" style="top:258px;font-size:12px;line-height:14px;color:#262626;left:1397.50px;width:800px;text-align:center;">M</div>
<div class="a t" style="top:258px;font-size:12px;line-height:14px;color:#262626;left:1453.50px;width:800px;text-align:center;">N</div>
<svg class="a" style="left:0;top:255px" width="25" height="17"><path d="M21 3 L21 13 L11 13 Z" fill="#b7b7b7"/></svg>
<div class="a t" style="top:274px;font-size:12px;line-height:14px;color:#262626;left:-387.50px;width:800px;text-align:center;">2</div>
<div class="a" style="left:0px;top:288px;width:25px;height:1px;background:#b4b4b4;"></div>
<div class="a t" style="top:324px;font-size:12px;line-height:14px;color:#262626;left:-387.50px;width:800px;text-align:center;">3</div>
<div class="a" style="left:0px;top:338px;width:25px;height:1px;background:#b4b4b4;"></div>
<div class="a t" style="top:341px;font-size:12px;line-height:14px;color:#262626;left:-387.50px;width:800px;text-align:center;">4</div>
<div class="a" style="left:0px;top:355px;width:25px;height:1px;background:#b4b4b4;"></div>
<div class="a t" style="top:391px;font-size:12px;line-height:14px;color:#262626;left:-387.50px;width:800px;text-align:center;">5</div>
<div class="a" style="left:0px;top:405px;width:25px;height:1px;background:#b4b4b4;"></div>
<div class="a t" style="top:458px;font-size:12px;line-height:14px;color:#262626;left:-387.50px;width:800px;text-align:center;">6</div>
<div class="a" style="left:0px;top:472px;width:25px;height:1px;background:#b4b4b4;"></div>
<div class="a t" style="top:547px;font-size:12px;line-height:14px;color:#262626;left:-387.50px;width:800px;text-align:center;">7</div>
<div class="a" style="left:0px;top:561px;width:25px;height:1px;background:#b4b4b4;"></div>
<div class="a t" style="top:597px;font-size:12px;line-height:14px;color:#262626;left:-387.50px;width:800px;text-align:center;">8</div>
<div class="a" style="left:0px;top:611px;width:25px;height:1px;background:#b4b4b4;"></div>
<div class="a t" style="top:647px;font-size:12px;line-height:14px;color:#262626;left:-387.50px;width:800px;text-align:center;">9</div>
<div class="a" style="left:0px;top:661px;width:25px;height:1px;background:#b4b4b4;"></div>
<div class="a t" style="top:697px;font-size:12px;line-height:14px;color:#262626;left:-387.50px;width:800px;text-align:center;">10</div>
<div class="a" style="left:0px;top:711px;width:25px;height:1px;background:#b4b4b4;"></div>
<div class="a t" style="top:770px;font-size:12px;line-height:14px;color:#262626;left:-387.50px;width:800px;text-align:center;">11</div>
<div class="a" style="left:0px;top:784px;width:25px;height:1px;background:#b4b4b4;"></div>
<div class="a t" style="top:855px;font-size:12px;line-height:14px;color:#262626;left:-387.50px;width:800px;text-align:center;">12</div>
<div class="a" style="left:0px;top:869px;width:25px;height:1px;background:#b4b4b4;"></div>
<div class="a t" style="top:905px;font-size:12px;line-height:14px;color:#262626;left:-387.50px;width:800px;text-align:center;">13</div>
<div class="a" style="left:0px;top:919px;width:25px;height:1px;background:#b4b4b4;"></div>
<div class="c" style="top:272.5px;letter-spacing:0.08px;left:-196.96px;width:600px;text-align:center;">Features</div>
<div class="c" style="top:272.5px;letter-spacing:0.00px;font-size:10.15px;left:65.50px;width:600px;text-align:center;"><b>TC ID</b></div>
<div class="c" style="top:272.5px;letter-spacing:0.00px;font-size:11.22px;left:222.50px;width:600px;text-align:center;"><b>Test Case Title and Description</b></div>
<div class="c" style="top:272.5px;letter-spacing:0.00px;font-size:11.34px;left:466.50px;width:600px;text-align:center;"><b>Precondition</b></div>
<div class="c" style="top:272.5px;letter-spacing:0.00px;font-size:11.15px;left:709.00px;width:600px;text-align:center;"><b>Set Steps</b></div>
<div class="c" style="top:272.5px;letter-spacing:0.00px;font-size:11.12px;left:939.50px;width:600px;text-align:center;"><b>Expected Result</b></div>
<div class="c" style="top:272.5px;letter-spacing:0.00px;font-size:11.27px;left:1144.50px;width:600px;text-align:center;"><b>Actual Result</b></div>
<div class="c" style="top:272.5px;letter-spacing:0.32px;left:183px;width:146px;overflow:hidden;">Test Conditions / Scenarios</div>
<div class="c" style="top:272.5px;letter-spacing:0.00px;font-size:11.01px;left:1541px;"><b>Test Status</b></div>
<div class="c" style="top:339.5px;letter-spacing:0.08px;left:-196.96px;width:600px;text-align:center;">Features</div>
<div class="c" style="top:339.5px;letter-spacing:0.00px;font-size:10.15px;left:65.50px;width:600px;text-align:center;"><b>TC ID</b></div>
<div class="c" style="top:339.5px;letter-spacing:0.00px;font-size:11.22px;left:222.50px;width:600px;text-align:center;"><b>Test Case Title and Description</b></div>
<div class="c" style="top:339.5px;letter-spacing:0.00px;font-size:11.34px;left:466.50px;width:600px;text-align:center;"><b>Precondition</b></div>
<div class="c" style="top:339.5px;letter-spacing:0.00px;font-size:11.15px;left:709.00px;width:600px;text-align:center;"><b>Set Steps</b></div>
<div class="c" style="top:339.5px;letter-spacing:0.00px;font-size:11.12px;left:939.50px;width:600px;text-align:center;"><b>Expected Result</b></div>
<div class="c" style="top:339.5px;letter-spacing:0.00px;font-size:11.27px;left:1144.50px;width:600px;text-align:center;"><b>Actual Result</b></div>
<div class="c" style="top:339.5px;letter-spacing:0.32px;left:183px;width:146px;overflow:hidden;">Test Conditions / Scenarios</div>
<div class="c" style="top:339.5px;letter-spacing:0.00px;font-size:11.01px;left:1541px;"><b>Test Status</b></div>
<div class="c" style="top:305.5px;letter-spacing:0.00px;font-size:10.83px;left:65.50px;width:600px;text-align:center;">TC_01</div>
<div class="c" style="top:305.5px;letter-spacing:0.36px;left:404px;">Navigation to the "Break Ticket" section.</div>
<div class="c" style="top:305.5px;letter-spacing:0.24px;left:646px;">The user should be logged in.</div>
<div class="c" style="top:305.5px;letter-spacing:0.27px;left:892px;">1. Navigate to "Break Ticket" section</div>
<div class="c" style="top:289.5px;letter-spacing:0.27px;left:1131px;">- The user should be navigated</div>
<div class="c" style="top:306.5px;letter-spacing:0.39px;left:1131px;">successfully to the "Break ticket"</div>
<div class="c" style="top:323.5px;letter-spacing:0.45px;left:1131px;">section</div>
<div class="c" style="top:305.5px;letter-spacing:0.00px;font-size:11.40px;left:1144.50px;width:600px;text-align:center;">As Expected</div>
<div class="c" style="top:305.5px;letter-spacing:0.00px;font-size:10.02px;left:1270.00px;width:600px;text-align:center;">PASS</div>
<div class="c" style="top:372.5px;letter-spacing:0.00px;font-size:10.83px;left:65.50px;width:600px;text-align:center;">TC_02</div>
<div class="c" style="top:372.5px;letter-spacing:0.41px;left:404px;">Mandatory (Not empty) name field</div>
<div class="c" style="top:364.5px;letter-spacing:0.56px;left:646px;">All other fields should be filled with valid</div>
<div class="c" style="top:381.5px;letter-spacing:0.45px;left:646px;">data</div>
<div class="c" style="top:356.5px;letter-spacing:0.19px;left:892px;">1. leave Name Field empty</div>
<div class="c" style="top:373.5px;letter-spacing:0.51px;left:892px;">2. Fill Valid start &amp; return times</div>
<div class="c" style="top:390.5px;letter-spacing:0.36px;left:892px;">3. click Submit</div>
<div class="c" style="top:364.5px;letter-spacing:0.38px;left:1131px;">The ticket shouldn't be submitted and</div>
<div class="c" style="top:381.5px;letter-spacing:0.37px;left:1131px;">an error message should be displayed.</div>
<div class="c" style="top:372.5px;letter-spacing:0.00px;font-size:11.40px;left:1144.50px;width:600px;text-align:center;">As Expected</div>
<div class="c" style="top:372.5px;letter-spacing:0.00px;font-size:10.02px;left:1270.00px;width:600px;text-align:center;">PASS</div>
<div class="c" style="top:431.5px;letter-spacing:0.00px;font-size:10.83px;left:65.50px;width:600px;text-align:center;">TC_03</div>
<div class="c" style="top:422.7px;letter-spacing:0.27px;left:404px;">All- Space Name --&gt; trimmed and results to</div>
<div class="c" style="top:439.7px;letter-spacing:0.36px;left:404px;">empty field name</div>
<div class="c" style="top:422.7px;letter-spacing:0.56px;left:646px;">All other fields should be filled with valid</div>
<div class="c" style="top:439.7px;letter-spacing:0.45px;left:646px;">data</div>
<div class="c" style="top:414.5px;letter-spacing:0.34px;left:892px;">1. enter name as "<u>&nbsp;&nbsp;&nbsp;&nbsp;&nbsp;&nbsp;&nbsp;&nbsp;</u>"</div>
<div class="c" style="top:431.5px;letter-spacing:0.51px;left:892px;">2. Fill Valid start &amp; return times</div>
<div class="c" style="top:448.5px;letter-spacing:0.36px;left:892px;">3. click Submit</div>
<div class="c" style="top:422.7px;letter-spacing:0.38px;left:1131px;">The ticket shouldn't be submitted and</div>
<div class="c" style="top:439.7px;letter-spacing:0.37px;left:1131px;">an error message should be displayed.</div>
<div class="c" style="top:431.5px;letter-spacing:0.00px;font-size:11.40px;left:1144.50px;width:600px;text-align:center;">As Expected</div>
<div class="c" style="top:431.5px;letter-spacing:0.00px;font-size:10.02px;left:1270.00px;width:600px;text-align:center;">PASS</div>
<div class="c" style="top:509.5px;letter-spacing:0.00px;font-size:10.83px;left:65.50px;width:600px;text-align:center;">TC_04</div>
<div class="c" style="top:492.5px;letter-spacing:0.53px;left:404px;">Valid name field input type with only</div>
<div class="c" style="top:509.5px;letter-spacing:0.44px;left:404px;">Alphabetic characters&nbsp; (Mixed upper &amp;</div>
<div class="c" style="top:526.5px;letter-spacing:0.31px;left:404px;">lower cases)</div>
<div class="c" style="top:501.0px;letter-spacing:0.56px;left:646px;">All other fields should be filled with valid</div>
<div class="c" style="top:518.0px;letter-spacing:0.45px;left:646px;">data</div>
<div class="c" style="top:492.5px;letter-spacing:0.28px;left:892px;">1. enter name as "Nada"</div>
<div class="c" style="top:509.5px;letter-spacing:0.52px;left:892px;">2. Fill valid start &amp; return times</div>
<div class="c" style="top:526.5px;letter-spacing:0.21px;left:892px;">3. Submit</div>
<div class="c" style="top:492.5px;letter-spacing:0.36px;left:1131px;">The ticket should be submitted and</div>
<div class="c" style="top:509.5px;letter-spacing:0.28px;left:1131px;">&nbsp;a successful message should be</div>
<div class="c" style="top:526.5px;letter-spacing:0.50px;left:1131px;">displayed.</div>
<div class="c" style="top:509.5px;letter-spacing:0.00px;font-size:11.40px;left:1144.50px;width:600px;text-align:center;">As Expected</div>
<div class="c" style="top:509.5px;letter-spacing:0.00px;font-size:10.02px;left:1270.00px;width:600px;text-align:center;">PASS</div>
<div class="c" style="top:579.0px;letter-spacing:0.00px;font-size:10.83px;left:65.50px;width:600px;text-align:center;">TC_05</div>
<div class="c" style="top:570.9px;letter-spacing:0.51px;left:404px;">Valid name field input type with</div>
<div class="c" style="top:587.9px;letter-spacing:0.40px;left:404px;">Alphabetic characters and leading spaces</div>
<div class="c" style="top:570.9px;letter-spacing:0.56px;left:646px;">All other fields should be filled with valid</div>
<div class="c" style="top:587.9px;letter-spacing:0.45px;left:646px;">data</div>
<div class="c" style="top:562.4px;letter-spacing:0.21px;left:892px;">1. enter name as "<u>&nbsp;&nbsp;&nbsp;Nada</u>"</div>
<div class="c" style="top:579.4px;letter-spacing:0.51px;left:892px;">2. Fill Valid start &amp; return times</div>
<div class="c" style="top:596.4px;letter-spacing:0.21px;left:892px;">3. Submit</div>
<div class="c" style="top:562.4px;letter-spacing:0.36px;left:1131px;">The ticket should be submitted and</div>
<div class="c" style="top:579.4px;letter-spacing:0.28px;left:1131px;">&nbsp;a successful message should be</div>
<div class="c" style="top:596.4px;letter-spacing:0.50px;left:1131px;">displayed.</div>
<div class="c" style="top:579.0px;letter-spacing:0.00px;font-size:11.40px;left:1144.50px;width:600px;text-align:center;">As Expected</div>
<div class="c" style="top:579.0px;letter-spacing:0.00px;font-size:10.02px;left:1270.00px;width:600px;text-align:center;">PASS</div>
<div class="c" style="top:629.0px;letter-spacing:0.00px;font-size:10.83px;left:65.50px;width:600px;text-align:center;">TC_06</div>
<div class="c" style="top:620.9px;letter-spacing:0.51px;left:404px;">Valid name field input type with</div>
<div class="c" style="top:637.9px;letter-spacing:0.47px;left:404px;">Alphabetic characters and trailing spaces</div>
<div class="c" style="top:620.9px;letter-spacing:0.56px;left:646px;">All other fields should be filled with valid</div>
<div class="c" style="top:637.9px;letter-spacing:0.45px;left:646px;">data</div>
<div class="c" style="top:612.4px;letter-spacing:0.21px;left:892px;">1. enter name as "<u>Nada&nbsp;&nbsp;&nbsp;</u>"</div>
<div class="c" style="top:629.4px;letter-spacing:0.51px;left:892px;">2. Fill Valid start &amp; return times</div>
<div class="c" style="top:646.4px;letter-spacing:0.21px;left:892px;">3. Submit</div>
<div class="c" style="top:612.4px;letter-spacing:0.36px;left:1131px;">The ticket should be submitted and</div>
<div class="c" style="top:629.4px;letter-spacing:0.28px;left:1131px;">&nbsp;a successful message should be</div>
<div class="c" style="top:646.4px;letter-spacing:0.50px;left:1131px;">displayed.</div>
<div class="c" style="top:629.0px;letter-spacing:0.00px;font-size:11.40px;left:1144.50px;width:600px;text-align:center;">As Expected</div>
<div class="c" style="top:629.0px;letter-spacing:0.00px;font-size:10.02px;left:1270.00px;width:600px;text-align:center;">PASS</div>
<div class="c" style="top:679.0px;letter-spacing:0.00px;font-size:10.83px;left:65.50px;width:600px;text-align:center;">TC_07</div>
<div class="c" style="top:662.5px;letter-spacing:0.51px;left:404px;">Valid name field input type with</div>
<div class="c" style="top:679.5px;letter-spacing:0.41px;left:404px;">Alphabetic characters and spaces in</div>
<div class="c" style="top:696.5px;letter-spacing:0.57px;left:404px;">middle</div>
<div class="c" style="top:670.9px;letter-spacing:0.56px;left:646px;">All other fields should be filled with valid</div>
<div class="c" style="top:687.9px;letter-spacing:0.45px;left:646px;">data</div>
<div class="c" style="top:662.5px;letter-spacing:0.23px;left:892px;">1. enter name as "<u>Na&nbsp;&nbsp;da</u>"</div>
<div class="c" style="top:679.5px;letter-spacing:0.51px;left:892px;">2. Fill Valid start &amp; return times</div>
<div class="c" style="top:696.5px;letter-spacing:0.21px;left:892px;">3. Submit</div>
<div class="c" style="top:662.5px;letter-spacing:0.36px;left:1131px;">The ticket should be submitted and</div>
<div class="c" style="top:679.5px;letter-spacing:0.28px;left:1131px;">&nbsp;a successful message should be</div>
<div class="c" style="top:696.5px;letter-spacing:0.50px;left:1131px;">displayed.</div>
<div class="c" style="top:679.0px;letter-spacing:0.00px;font-size:11.40px;left:1144.50px;width:600px;text-align:center;">As Expected</div>
<div class="c" style="top:679.0px;letter-spacing:0.00px;font-size:10.02px;left:1270.00px;width:600px;text-align:center;">PASS</div>
<div class="c" style="top:740.5px;letter-spacing:0.00px;font-size:10.83px;left:65.50px;width:600px;text-align:center;">TC_08</div>
<div class="c" style="top:740.5px;letter-spacing:0.47px;left:404px;">Invalid Name field input type with numbers</div>
<div class="c" style="top:731.5px;letter-spacing:0.56px;left:646px;">All other fields should be filled with valid</div>
<div class="c" style="top:748.5px;letter-spacing:0.45px;left:646px;">data</div>
<div class="c" style="top:723.5px;letter-spacing:0.30px;left:892px;">1. enter name as "<u>Nada25</u>"</div>
<div class="c" style="top:740.5px;letter-spacing:0.51px;left:892px;">2. Fill Valid start &amp; return times</div>
<div class="c" style="top:757.5px;letter-spacing:0.21px;left:892px;">3. Submit</div>
<div class="c" style="top:731.5px;letter-spacing:0.38px;left:1131px;">The ticket shouldn't be submitted and</div>
<div class="c" style="top:748.5px;letter-spacing:0.37px;left:1131px;">an error message should be displayed.</div>
<div class="c" style="top:740.5px;letter-spacing:0.00px;font-size:11.40px;left:1144.50px;width:600px;text-align:center;">As Expected</div>
<div class="c" style="top:740.5px;letter-spacing:0.00px;font-size:10.02px;left:1270.00px;width:600px;text-align:center;">PASS</div>
<div class="c" style="top:819.5px;letter-spacing:0.00px;font-size:10.83px;left:65.50px;width:600px;text-align:center;">TC_09</div>
<div class="c" style="top:810.4px;letter-spacing:0.50px;left:404px;">Invalid Name field input type with</div>
<div class="c" style="top:827.4px;letter-spacing:0.47px;left:404px;">special characters</div>
<div class="c" style="top:810.4px;letter-spacing:0.56px;left:646px;">All other fields should be filled with valid</div>
<div class="c" style="top:827.4px;letter-spacing:0.45px;left:646px;">data</div>
<div class="c" style="top:802.3px;letter-spacing:0.27px;left:892px;">1. enter name as "<u>Nada$</u>"</div>
<div class="c" style="top:819.3px;letter-spacing:0.51px;left:892px;">2. Fill Valid start &amp; return times</div>
<div class="c" style="top:836.3px;letter-spacing:0.21px;left:892px;">3. Submit</div>
<div class="c" style="top:810.4px;letter-spacing:0.38px;left:1131px;">The ticket shouldn't be submitted and</div>
<div class="c" style="top:827.4px;letter-spacing:0.37px;left:1131px;">an error message should be displayed.</div>
<div class="c" style="top:819.5px;letter-spacing:0.00px;font-size:11.40px;left:1144.50px;width:600px;text-align:center;">As Expected</div>
<div class="c" style="top:819.5px;letter-spacing:0.00px;font-size:10.02px;left:1270.00px;width:600px;text-align:center;">PASS</div>
<div class="c" style="top:887.0px;letter-spacing:0.00px;font-size:10.83px;left:65.50px;width:600px;text-align:center;">TC_10</div>
<div class="c" style="top:878.5px;letter-spacing:0.50px;left:404px;">Invalid Name field input type with</div>
<div class="c" style="top:895.5px;letter-spacing:0.59px;left:404px;">length less then 2 characters</div>
<div class="c" style="top:878.5px;letter-spacing:0.56px;left:646px;">All other fields should be filled with valid</div>
<div class="c" style="top:895.5px;letter-spacing:0.45px;left:646px;">data</div>
<div class="c" style="top:870.5px;letter-spacing:0.38px;left:892px;">1. enter name as "<u>N</u>"</div>
<div class="c" style="top:887.5px;letter-spacing:0.51px;left:892px;">2. Fill Valid start &amp; return times</div>
<div class="c" style="top:904.5px;letter-spacing:0.21px;left:892px;">3. Submit</div>
<div class="c" style="top:878.5px;letter-spacing:0.38px;left:1131px;">The ticket shouldn't be submitted and</div>
<div class="c" style="top:895.5px;letter-spacing:0.37px;left:1131px;">an error message should be displayed.</div>
<div class="c" style="top:887.0px;letter-spacing:0.00px;font-size:11.40px;left:1144.50px;width:600px;text-align:center;">As Expected</div>
<div class="c" style="top:887.0px;letter-spacing:0.00px;font-size:10.02px;left:1270.00px;width:600px;text-align:center;">PASS</div>
<div class="a" style="left:0;top:919px;width:1895px;height:45px;overflow:hidden;">
<div class="c" style="top:34.5px;letter-spacing:0.00px;font-size:11.10px;left:65.50px;width:600px;text-align:center;">TC_11</div>
<div class="c" style="top:26.5px;letter-spacing:0.50px;left:404px;">Invalid Name field input type with</div>
<div class="c" style="top:26.5px;letter-spacing:0.56px;left:646px;">All other fields should be filled with valid</div>
<div class="c" style="top:1.5px;letter-spacing:0.29px;left:892px;">1. enter name as</div>
<div class="c" style="top:18.5px;letter-spacing:0.38px;left:892px;">"<u>Nadaaaaaaaaaaaaaaaaaaaaaaaaaaaaaa</u></div>
<div class="c" style="top:35.5px;letter-spacing:0.47px;left:892px;"><u>aaaaaaaaaaaaaaaaaaa</u>" --&gt; (52</div>
<div class="c" style="top:26.5px;letter-spacing:0.38px;left:1131px;">The ticket shouldn't be submitted and</div>
<div class="c" style="top:34.5px;letter-spacing:0.00px;font-size:11.40px;left:1144.50px;width:600px;text-align:center;">As Expected</div>
<div class="c" style="top:34.5px;letter-spacing:0.00px;font-size:10.02px;left:1270.00px;width:600px;text-align:center;">PASS</div>
</div>
<div class="c" style="top:305.5px;letter-spacing:0.47px;left:28px;">Navigation</div>
<div class="c" style="top:744.5px;letter-spacing:0.22px;left:-196.89px;width:600px;text-align:center;">Name Field</div>
<div class="c" style="top:405.5px;letter-spacing:0.29px;left:-44.86px;width:600px;text-align:center;">Empty field name</div>
<div class="c" style="top:583.5px;letter-spacing:0.49px;left:-44.76px;width:600px;text-align:center;">Valid name input type</div>
<div class="c" style="top:922.5px;letter-spacing:0.57px;left:-44.72px;width:600px;text-align:center;">Invalid name</div>
<div class="a" style="left:1894px;top:255px;width:25px;height:709px;background:#e6e6e6;"></div>
<div class="a" style="left:1894px;top:271px;width:1px;height:693px;background:#8c8c8c;"></div>
<div class="a" style="left:1898px;top:276px;width:19px;height:671px;background:#dadada;"></div>
<div class="a" style="left:1898px;top:257px;width:19px;height:19px;border:1px solid #767676;background:#fff;"></div>
<svg class="a" style="left:1898px;top:257px" width="19" height="19"><path d="M5 11 L9.5 6 L14 11 Z" fill="#777"/></svg>
<div class="a" style="left:1898px;top:293px;width:19px;height:309px;border:1px solid #767676;background:#fff;"></div>
<div class="a" style="left:1898px;top:946px;width:19px;height:19px;border:1px solid #767676;background:#fff;"></div>
<svg class="a" style="left:1898px;top:946px" width="19" height="19"><path d="M5 8 L9.5 13 L14 8 Z" fill="#777"/></svg>
<div class="a" style="left:0px;top:964px;width:1919px;height:29px;background:#e6e6e6;"></div>
<div class="a" style="left:0px;top:964px;width:1895px;height:1px;background:#ababab;"></div>
<svg class="a" style="left:0;top:964px" width="120" height="29"><path d="M34 9 L28 14 L34 19 Z" fill="#c8c8c8"/><path d="M56 9 L62 14 L56 19 Z" fill="#c8c8c8"/></svg>
<div class="a" style="left:103px;top:968px;width:1px;height:21px;background:#ababab;"></div>
<div class="a t" style="top:966px;font-size:17.5px;line-height:20px;color:#444;letter-spacing:-0.47px;left:121px;">Ticket System Analysis</div>
<div class="a" style="left:308px;top:964px;width:118px;height:25px;background:#fff;border-bottom:2px solid #217346;"></div>
<div class="a t" style="top:966px;font-size:17.5px;line-height:20px;color:#217346;font-weight:700;letter-spacing:-0.44px;left:320px;">Test Design</div>
<div class="a t" style="top:966px;font-size:17.5px;line-height:20px;color:#444;letter-spacing:0.22px;left:440px;">bug report</div>
<div class="a" style="left:536px;top:968px;width:1px;height:21px;background:#ababab;"></div>
<svg class="a" style="left:568px;top:966.6px" width="24" height="24"><circle cx="12" cy="12" r="9.5" fill="none" stroke="#767676" stroke-width="1.3"/><path d="M12 7v10M7 12h10" stroke="#767676" stroke-width="1.3"/></svg>
<div class="a" style="left:1149px;top:972px;width:2px;height:2px;background:#a0a0a0;"></div>
<div class="a" style="left:1149px;top:977px;width:2px;height:2px;background:#a0a0a0;"></div>
<div class="a" style="left:1149px;top:982px;width:2px;height:2px;background:#a0a0a0;"></div>
<div class="a" style="left:1186px;top:969px;width:691px;height:19px;background:#dadada;"></div>
<div class="a" style="left:1167px;top:969px;width:19px;height:19px;border:1px solid #767676;background:#fff;"></div>
<svg class="a" style="left:1167px;top:969px" width="19" height="19"><path d="M11.5 5 L6.5 9.5 L11.5 14 Z" fill="#777"/></svg>
<div class="a" style="left:1186px;top:969px;width:540px;height:19px;border:1px solid #767676;background:#fff;"></div>
<div class="a" style="left:1876px;top:969px;width:19px;height:19px;border:1px solid #767676;background:#fff;"></div>
<svg class="a" style="left:1876px;top:969px" width="19" height="19"><path d="M8 5 L13 9.5 L8 14 Z" fill="#777"/></svg>
<div class="a" style="left:0px;top:993px;width:1919px;height:27px;background:#f3f2f1;"></div>
<div class="a" style="left:0px;top:993px;width:1919px;height:1px;background:#d6d6d6;"></div>
<div class="a t" style="top:1001px;font-size:12.5px;line-height:14px;color:#444;letter-spacing:-0.03px;left:9px;">Ready</div>
<div class="a t" style="top:1001px;font-size:12.5px;line-height:14px;color:#444;letter-spacing:0.10px;left:92px;">Accessibility: Investigate</div>
<div class="a" style="left:1555px;top:994px;width:50px;height:26px;background:#cfcfcf;"></div>
<div class="a t" style="top:1001px;font-size:12.5px;line-height:14px;color:#444;letter-spacing:-0.34px;left:1885px;">70%</div>
<div class="a" style="left:1728px;top:1007px;width:125px;height:1px;background:#767676;"></div>
<div class="a" style="left:1768px;top:1000px;width:6px;height:14px;background:#767676;"></div>
<div class="a" style="left:1790px;top:1004px;width:1px;height:7px;background:#767676;"></div>
<div class="a" style="left:1712px;top:1006px;width:9px;height:1px;background:#666;"></div>
<div class="a" style="left:1859px;top:1007px;width:9px;height:1px;background:#666;"></div>
<div class="a" style="left:1863px;top:1003px;width:1px;height:9px;background:#666;"></div>
<div class="a" style="left:0px;top:1020px;width:1919px;height:59px;background:#1c1c1c;"></div>
<div class="a" style="left:462px;top:1030px;width:274px;height:40px;border-radius:20px;background:#3a3a3a;border:1px solid #4a4a4a;"></div>
<div class="a t" style="top:1043px;font-size:16px;line-height:17px;color:#e6e6e6;letter-spacing:0.05px;left:508px;">Search</div>
<svg class="a" style="left:69px;top:996px;" width="20" height="22" viewBox="0 0 20 22"><circle cx="8.8" cy="5.2" r="2.3" fill="none" stroke="#444" stroke-width="1.1"/><path d="M1.5 6.5 Q2 5.5 3 6 Q6 8.8 8.8 8.8 Q11.6 8.8 14.6 6 Q15.6 5.5 16.1 6.5 Q14 10 11.5 10.8 L12 13 M6 10.8 Q3.5 10 1.5 6.5 M6 10.8 L4 18.6 Q4.5 19.6 5.8 19 L8.5 13.5 L9.8 15.5" fill="none" stroke="#444" stroke-width="1.1" stroke-linejoin="round"/><path d="M10.5 13.5 L17.5 20 M17.5 13.5 L10.5 20" stroke="#444" stroke-width="1.2"/></svg>
<svg class="a" style="left:1571px;top:998px;" width="18" height="17" viewBox="0 0 18 17"><rect x="1" y="1" width="15" height="14" fill="none" stroke="#444" stroke-width="1.2"/><path d="M1 5.7 H16 M1 10.3 H16 M6 1 V15 M11 1 V15" stroke="#444" stroke-width="1.1"/></svg>
<svg class="a" style="left:1621px;top:998px;" width="18" height="17" viewBox="0 0 18 17"><rect x="1" y="1" width="15" height="14" fill="none" stroke="#444" stroke-width="1.2"/><rect x="4" y="4" width="9" height="8" fill="none" stroke="#444" stroke-width="1"/><path d="M5.5 6.5 H11.5 M5.5 9 H11.5" stroke="#444" stroke-width="1"/></svg>
<svg class="a" style="left:1671px;top:998px;" width="18" height="17" viewBox="0 0 18 17"><rect x="1" y="1" width="15" height="14" fill="none" stroke="#444" stroke-width="1.2"/><path d="M6 1 V8 M11 1 V8 M1 8 H16" stroke="#444" stroke-width="1.1" stroke-dasharray="none"/></svg>
<svg class="a" style="left:416px;top:1036px;" width="30" height="30" viewBox="0 0 30 30"><defs><linearGradient id="wg" x1="0" y1="0" x2="1" y2="1"><stop offset="0" stop-color="#6fd0f7"/><stop offset="1" stop-color="#1b9fe8"/></linearGradient></defs><rect x="0" y="0" width="13.5" height="13.5" rx="1" fill="url(#wg)"/><rect x="15" y="0" width="13.5" height="13.5" rx="1" fill="url(#wg)"/><rect x="0" y="15" width="13.5" height="13.5" rx="1" fill="url(#wg)"/><rect x="15" y="15" width="13.5" height="13.5" rx="1" fill="url(#wg)"/></svg>
<svg class="a" style="left:474px;top:1038px;" width="24" height="24" viewBox="0 0 24 24"><circle cx="10.5" cy="10.5" r="7" fill="none" stroke="#e4e4e4" stroke-width="2"/><path d="M15.5 15.5 L21 21" stroke="#e4e4e4" stroke-width="2.4" stroke-linecap="round"/></svg>
<svg class="a" style="left:669px;top:1034px;" width="64" height="34" viewBox="0 0 64 34"><path d="M6 8 Q12 1 24 4 Q34 -1 44 3 Q56 2 61 10 Q64 20 58 27 Q40 34 20 31 Q4 28 2 18 Q1 12 6 8 Z" fill="#9fd6e8"/><path d="M10 6 Q24 0 40 5 L40 12 L6 12 Z" fill="#f1ecc6"/><path d="M36 10 Q44 3 60 9 L61 14 L36 14 Z" fill="#3f8f5a"/><path d="M3 19 Q30 12 62 18 Q60 28 40 31 Q14 33 3 22 Z" fill="#e9b56a"/><path d="M6 23 Q8 14 20 13 Q34 11 46 17 Q54 20 58 25 Q48 23 42 26 Q26 31 10 28 Q6 27 6 23 Z" fill="#8e969c"/><circle cx="11" cy="21" r="1" fill="#333"/></svg>
<svg class="a" style="left:751px;top:1036px;" width="32" height="30" viewBox="0 0 32 30"><rect x="0.5" y="8" width="22" height="20" rx="2" fill="#6d6d6d"/><rect x="8" y="0.5" width="23" height="20" rx="2" fill="#f2f2f2"/><rect x="8" y="8" width="14.5" height="12.5" fill="#bdbdbd"/></svg>
<svg class="a" style="left:807px;top:1035px;" width="30" height="30" viewBox="0 0 30 30"><path d="M1 9 L27 1.5 Q29 1 29 3.5 V7 L5 12 Z" fill="#a25ce8"/><rect x="1" y="11" width="28" height="17" rx="3" fill="#8a45dc"/><rect x="1" y="15" width="28" height="4" fill="#b98af2"/><rect x="1" y="22" width="28" height="6" rx="3" fill="#7a35c9"/></svg>
<svg class="a" style="left:861px;top:1038px;" width="32" height="24" viewBox="0 0 32 24"><rect x="0.5" y="0.5" width="30" height="21" fill="#9bd3f2" stroke="#3b8ed0" stroke-width="1"/><circle cx="9" cy="9" r="5.5" fill="#2f7fd0"/><path d="M9 9 V3.5 A5.5 5.5 0 0 1 14.5 9 Z" fill="#f0a030"/><path d="M19 6 H27 M19 10 H27" stroke="#e8f4fc" stroke-width="2"/><path d="M4 17.5 H14" stroke="#f0a030" stroke-width="1.6"/><path d="M17 17.5 H27" stroke="#2f7fd0" stroke-width="1.6"/></svg>
<svg class="a" style="left:918px;top:1037px;" width="30" height="26" viewBox="0 0 30 26"><defs><linearGradient id="cp" x1="0" y1="0" x2="1" y2="1"><stop offset="0" stop-color="#2f9fe8"/><stop offset="0.5" stop-color="#c86bd0"/><stop offset="1" stop-color="#f2a23a"/></linearGradient></defs><path d="M9 1 H19 Q23 1 24.5 5 L28 16 Q29 21 24 22 L20 24 H10 Q5 24 4 20 L1 9 Q0 4 5 3 Z" fill="url(#cp)"/><path d="M12 6 L17 6 L14 19 L10 19 Z" fill="#5a3d78" opacity="0.7"/></svg>
<svg class="a" style="left:972px;top:1035px;" width="32" height="30" viewBox="0 0 32 30"><rect x="2" y="1" width="19" height="17" fill="#e6e6e6" stroke="#9a9a9a" stroke-width="0.8"/><path d="M5 5 l1.5 1.5 l2.5 -3 M5 10 l1.5 1.5 l2.5 -3 M5 15 l1.5 1.5 l2.5 -3" fill="none" stroke="#2f6fc0" stroke-width="1.1"/><path d="M11 5 H18 M11 10 H16" stroke="#888" stroke-width="1"/><rect x="13" y="10" width="16" height="12" fill="#4a78c8" stroke="#cfd6e0" stroke-width="1.2"/><path d="M8 24 L25 22.5 L29 26.5 L10 29 Z" fill="#cfcfcf"/></svg>
<svg class="a" style="left:1026px;top:1036px;" width="32" height="30" viewBox="0 0 32 30"><path d="M10 7 V3.5 a2 2 0 0 1 2 -2 H19 a2 2 0 0 1 2 2 V7" fill="none" stroke="#2f9fe8" stroke-width="2"/><path d="M1 7 H30 V24 a4 4 0 0 1 -4 4 H5 a4 4 0 0 1 -4 -4 Z" fill="#f4f4f4"/><rect x="10" y="11" width="5" height="5" fill="#f25022"/><rect x="16" y="11" width="5" height="5" fill="#7fba00"/><rect x="10" y="17" width="5" height="5" fill="#00a4ef"/><rect x="16" y="17" width="5" height="5" fill="#ffb900"/></svg>
<svg class="a" style="left:1084px;top:1035px;" width="30" height="30" viewBox="0 0 30 30"><rect x="1" y="4" width="24" height="24" rx="2" fill="#e9e9e9" stroke="#bdbdbd" stroke-width="1"/><path d="M6 23 L8 17 L22 3 L26 7 L12 21 Z" fill="#e03a2f"/><path d="M6 23 L8 17 L12 21 Z" fill="#f0c890"/><path d="M6 23 l0.8 -2.3 l1.5 1.5 Z" fill="#333"/><path d="M22 3 L24 1 L28 5 L26 7 Z" fill="#f08a80"/></svg>
<svg class="a" style="left:1139px;top:1038px;" width="26" height="25" viewBox="0 0 26 25"><rect x="0" y="0" width="25" height="24" rx="4" fill="#0b5cab"/><rect x="4.5" y="4.5" width="6.5" height="13" rx="1" fill="#fff"/><rect x="14" y="4.5" width="6.5" height="8" rx="1" fill="#fff"/></svg>
<svg class="a" style="left:1192px;top:1035px;" width="30" height="30" viewBox="0 0 30 30"><ellipse cx="14.5" cy="14.5" rx="13.5" ry="14" fill="#e0262c"/><ellipse cx="14.5" cy="14.5" rx="6" ry="10.5" fill="#1c1c1c"/></svg>
<svg class="a" style="left:1246px;top:1035px;" width="32" height="30" viewBox="0 0 32 30"><defs><linearGradient id="eg" x1="0" y1="0" x2="1" y2="0"><stop offset="0" stop-color="#1f8fe0"/><stop offset="1" stop-color="#3fc87a"/></linearGradient></defs><path d="M2 16 A14 14 0 0 1 30 13 Q30 20 23 20 Q19 20 19 17 Q20 12 15 12 Q9 12 9 19 Q9 26 18 27.5 Q8 30 3 22 Q2 19 2 16 Z" fill="url(#eg)"/><path d="M9 19 Q9 26 18 27.5 Q25 27 28 22 Q22 25 17 23 Q12 21 13 15 Q9 15 9 19 Z" fill="#1566b8"/><rect x="1" y="18" width="14" height="10" rx="1" fill="#c78a3a"/><rect x="5" y="16" width="6" height="3" fill="none" stroke="#8a5a20" stroke-width="1"/><rect x="1" y="21.5" width="14" height="1.5" fill="#8a5a20"/></svg>
<svg class="a" style="left:1302px;top:1034px;" width="31" height="31" viewBox="0 0 31 31"><defs><radialGradient id="ff" cx="0.6" cy="0.3" r="0.8"><stop offset="0" stop-color="#ffd43a"/><stop offset="0.5" stop-color="#ff7a1a"/><stop offset="1" stop-color="#e0263c"/></radialGradient></defs><path d="M15 3 Q17 0 21 1 Q20 4 23 6 Q30 11 29 19 Q27 29 15.5 29.5 Q3 29 1.5 17 Q1.5 11 5 8 Q5 11 7 11 Q8 6 15 3 Z" fill="url(#ff)"/><circle cx="14.5" cy="17" r="6.5" fill="#7a3fd0"/><path d="M8 15 Q12 10 19 13 Q15 13 14 16 Q12 18 8 15 Z" fill="#ff9a2a"/></svg>
<svg class="a" style="left:1356px;top:1034px;" width="32" height="32" viewBox="0 0 32 32"><circle cx="15.5" cy="15.5" r="15" fill="#e8453c"/><path d="M15.5 15.5 L2.5 8 A15 15 0 0 0 13 30.3 Z" fill="#34a853"/><path d="M15.5 15.5 L13 30.3 A15 15 0 0 0 28.5 8 Z" fill="#fbbc05"/><path d="M2.5 8 A15 15 0 0 1 28.5 8 L15.5 8 Z" fill="#e8453c"/><circle cx="15.5" cy="15.5" r="7" fill="#fff"/><circle cx="15.5" cy="15.5" r="5.5" fill="#4285f4"/></svg>
<div class="a" style="left:1368px;top:1070px;width:8px;height:3px;border-radius:2px;background:#8a8a8a;"></div>
<svg class="a" style="left:1411px;top:1036px;" width="32" height="29" viewBox="0 0 32 29"><path d="M1 4 a2 2 0 0 1 2 -2 H11 L14 5 H29 a2 2 0 0 1 2 2 V10 H1 Z" fill="#e8a820"/><rect x="1" y="7" width="30" height="21" rx="2" fill="#ffd04a"/><rect x="6" y="18" width="20" height="10" rx="1" fill="#2478d4"/><rect x="10" y="21" width="12" height="3" rx="1" fill="#5ab0f4"/></svg>
<div class="a" style="left:1423px;top:1070px;width:8px;height:3px;border-radius:2px;background:#8a8a8a;"></div>
<div class="a" style="left:1457px;top:1025px;width:50px;height:51px;border-radius:5px;background:#2e2e2e;border:1px solid #383838;"></div>
<svg class="a" style="left:1467px;top:1035px;" width="31" height="30" viewBox="0 0 31 30"><rect x="8" y="0" width="22" height="29" rx="2" fill="#21a366"/><rect x="19" y="0" width="11" height="9.7" fill="#33c481"/><rect x="8" y="9.7" width="11" height="9.7" fill="#107c41"/><rect x="8" y="19.4" width="22" height="9.6" fill="#185c37"/><rect x="19" y="9.7" width="11" height="9.7" fill="#21a366"/><rect x="0" y="6" width="17" height="17" rx="1.5" fill="#107c41"/><path d="M5 10 L12 19 M12 10 L5 19" stroke="#fff" stroke-width="2.2"/></svg>
<div class="a" style="left:1472px;top:1070px;width:20px;height:3px;border-radius:2px;background:#4cc2ff;"></div>
<svg class="a" style="left:1594px;top:1044px;" width="17" height="11" viewBox="0 0 17 11"><path d="M1.5 9.5 L8.5 2 L15.5 9.5" fill="none" stroke="#fff" stroke-width="2"/></svg>
<svg class="a" style="left:1633px;top:1039px;" width="18" height="22" viewBox="0 0 18 22"><rect x="5.5" y="1" width="7" height="12.5" rx="3.5" fill="#60cdff"/><path d="M2.5 9.5 a6.5 6.5 0 0 0 13 0 M9 16 V20.5" fill="none" stroke="#60cdff" stroke-width="1.6"/></svg>
<svg class="a" style="left:1684px;top:1045px;" width="12" height="17" viewBox="0 0 12 17"><path d="M9 3 Q5 0.5 3 3.5 Q2 6.5 8 7 Q2 7.5 1.5 11.5 Q2 15.5 9.5 15" fill="none" stroke="#fff" stroke-width="1.5"/></svg>
<svg class="a" style="left:1727px;top:1041px;" width="21" height="17" viewBox="0 0 21 17"><path d="M1 6 Q10.5 -3 20 6" fill="none" stroke="#fff" stroke-width="1.6"/><path d="M4.5 9.5 Q10.5 3.5 16.5 9.5" fill="none" stroke="#fff" stroke-width="1.6"/><path d="M7.5 12.5 Q10.5 9.5 13.5 12.5" fill="none" stroke="#fff" stroke-width="1.6"/><circle cx="10.5" cy="15" r="1.4" fill="#fff"/></svg>
<svg class="a" style="left:1757px;top:1041px;" width="22" height="18" viewBox="0 0 22 18"><path d="M1 6 H5 L10 1.5 V16.5 L5 12 H1 Z" fill="none" stroke="#fff" stroke-width="1.4"/><path d="M13 5.5 Q15.5 9 13 12.5 M16 3 Q20 9 16 15 M19 1 Q24 9 19 17" fill="none" stroke="#fff" stroke-width="1.4"/></svg>
<svg class="a" style="left:1786px;top:1039px;" width="23" height="18" viewBox="0 0 23 18"><rect x="3.5" y="6" width="15" height="9" rx="2" fill="none" stroke="#fff" stroke-width="1.4"/><rect x="19" y="8.5" width="2" height="4" fill="#fff"/><rect x="5.5" y="8" width="8" height="5" fill="#fff"/><path d="M4 1 L1 8 H5 L3 13" fill="none" stroke="#fff" stroke-width="1.5"/></svg>
<svg class="a" style="left:1856.3px;top:1033.3px;" width="41" height="16.8" viewBox="0 0 41 16.8"><g transform="translate(0.0,1) scale(1.0,1)"><path d="M7.5 9.936000000000002 Q5 9.936000000000002 4.5 5.940000000000001 A1.9 1.9 0 1 1 4.4 6.48 M4.3 9.936000000000002 Q2.2 9.936000000000002 1.6 14.3" fill="none" stroke="#fff" stroke-width="1.5"/></g><g transform="translate(8.5,1) scale(1.0,1)"></g><g transform="translate(13.0,1) scale(1.0,1)"><path d="M1.2 0.3 Q2.6 5.4 2.9 10.8" fill="none" stroke="#fff" stroke-width="2.0"/></g><g transform="translate(17.2,1) scale(1.0,1)"><path d="M1.2 0.3 Q2.6 5.4 2.9 10.8" fill="none" stroke="#fff" stroke-width="2.0"/></g><g transform="translate(21.4,1) scale(1.0,1)"><circle cx="1.8" cy="4.86" r="1" fill="#fff"/><circle cx="1.8" cy="9.600000000000001" r="1" fill="#fff"/></g><g transform="translate(25.0,1) scale(1.0,1)"><ellipse cx="3.8" cy="6.264" rx="2.8" ry="3.888" fill="none" stroke="#fff" stroke-width="1.5"/></g><g transform="translate(32.6,1) scale(1.0,1)"><ellipse cx="3.8" cy="6.264" rx="2.8" ry="3.888" fill="none" stroke="#fff" stroke-width="1.5"/></g></svg>
<svg class="a" style="left:1827.488px;top:1053.05px;" width="70" height="17.5" viewBox="0 0 70 17.5"><g transform="translate(0.0,1) scale(1.08,1)"><path d="M5.8 1 Q5.2 3.2 1.6 2.2 M1.2 0.3 Q2 5.75 2.3 11.5" fill="none" stroke="#fff" stroke-width="1.5"/></g><g transform="translate(7.8,1) scale(1.08,1)"><path d="M2.6 4.15 l1.6 1.6 l-1.6 1.6 l-1.6 -1.6 Z" fill="#fff"/></g><g transform="translate(13.5,1) scale(1.08,1)"><path d="M5.8 1 Q5.2 3.2 1.6 2.2 M1.2 0.3 Q2 5.75 2.3 11.5" fill="none" stroke="#fff" stroke-width="1.5"/></g><g transform="translate(21.3,1) scale(1.08,1)"><path d="M0.8 1.2 H5.6 Q5.2 5.75 5.9 11.5" fill="none" stroke="#fff" stroke-width="1.5"/></g><g transform="translate(29.1,1) scale(1.08,1)"><path d="M5.6 -0.5 L0.6 12.3" fill="none" stroke="#fff" stroke-width="1.5"/></g><g transform="translate(35.1,1) scale(1.08,1)"><path d="M2.6 4.15 l1.6 1.6 l-1.6 1.6 l-1.6 -1.6 Z" fill="#fff"/></g><g transform="translate(40.8,1) scale(1.08,1)"><path d="M7 0.8 Q6.2 3.4 4.5 1.2 Q3.6 3.4 1.6 2.2 M1.2 0.3 Q2 5.75 2.3 11.5" fill="none" stroke="#fff" stroke-width="1.5"/></g><g transform="translate(49.5,1) scale(1.08,1)"><path d="M5.6 -0.5 L0.6 12.3" fill="none" stroke="#fff" stroke-width="1.5"/></g><g transform="translate(55.5,1) scale(1.08,1)"><path d="M2.6 4.15 l1.6 1.6 l-1.6 1.6 l-1.6 -1.6 Z" fill="#fff"/></g><g transform="translate(61.2,1) scale(1.08,1)"><path d="M5.5 3.2 A2.2 2.2 0 1 0 5.4 3.6 M5.6 1 Q5.2 5.75 6 11.5" fill="none" stroke="#fff" stroke-width="1.5"/></g></svg>
<svg class="a" style="left:835px;top:1000px;" width="250" height="65" viewBox="0 0 250 65"><g fill="none" stroke="#ababab" stroke-width="6.2" stroke-linejoin="round" opacity="0.32"><path d="M12.2 25.6 V41 Q12.2 53 24 53 H49 Q61 53 61 41 V25.6"/><path d="M30.3 11.399999999999999 L36.3 17.4 L30.3 23.4 L24.3 17.4 Z" fill="#ababab" stroke="none"/><path d="M45.3 11.2 L51.3 17.2 L45.3 23.2 L39.3 17.2 Z" fill="#ababab" stroke="none"/><path d="M71.3 12 V53 H237 V46 Q237 27 217 27 Q207 27 200 33"/><path d="M101.6 26 V53 M121.4 26 V53 M141.5 26 V53"/><rect x="153.4" y="11" width="13.2" height="6.5" fill="#ababab" stroke="none"/><rect x="169.6" y="11" width="14.4" height="6.5" fill="#ababab" stroke="none"/><path d="M156 20 L162 27"/><path d="M166 28.8 A12 12 0 1 1 160 46"/><path d="M216.5 10.7 L222.5 16.7 L216.5 22.7 L210.5 16.7 Z" fill="#ababab" stroke="none"/></g></svg>
</body></html>
